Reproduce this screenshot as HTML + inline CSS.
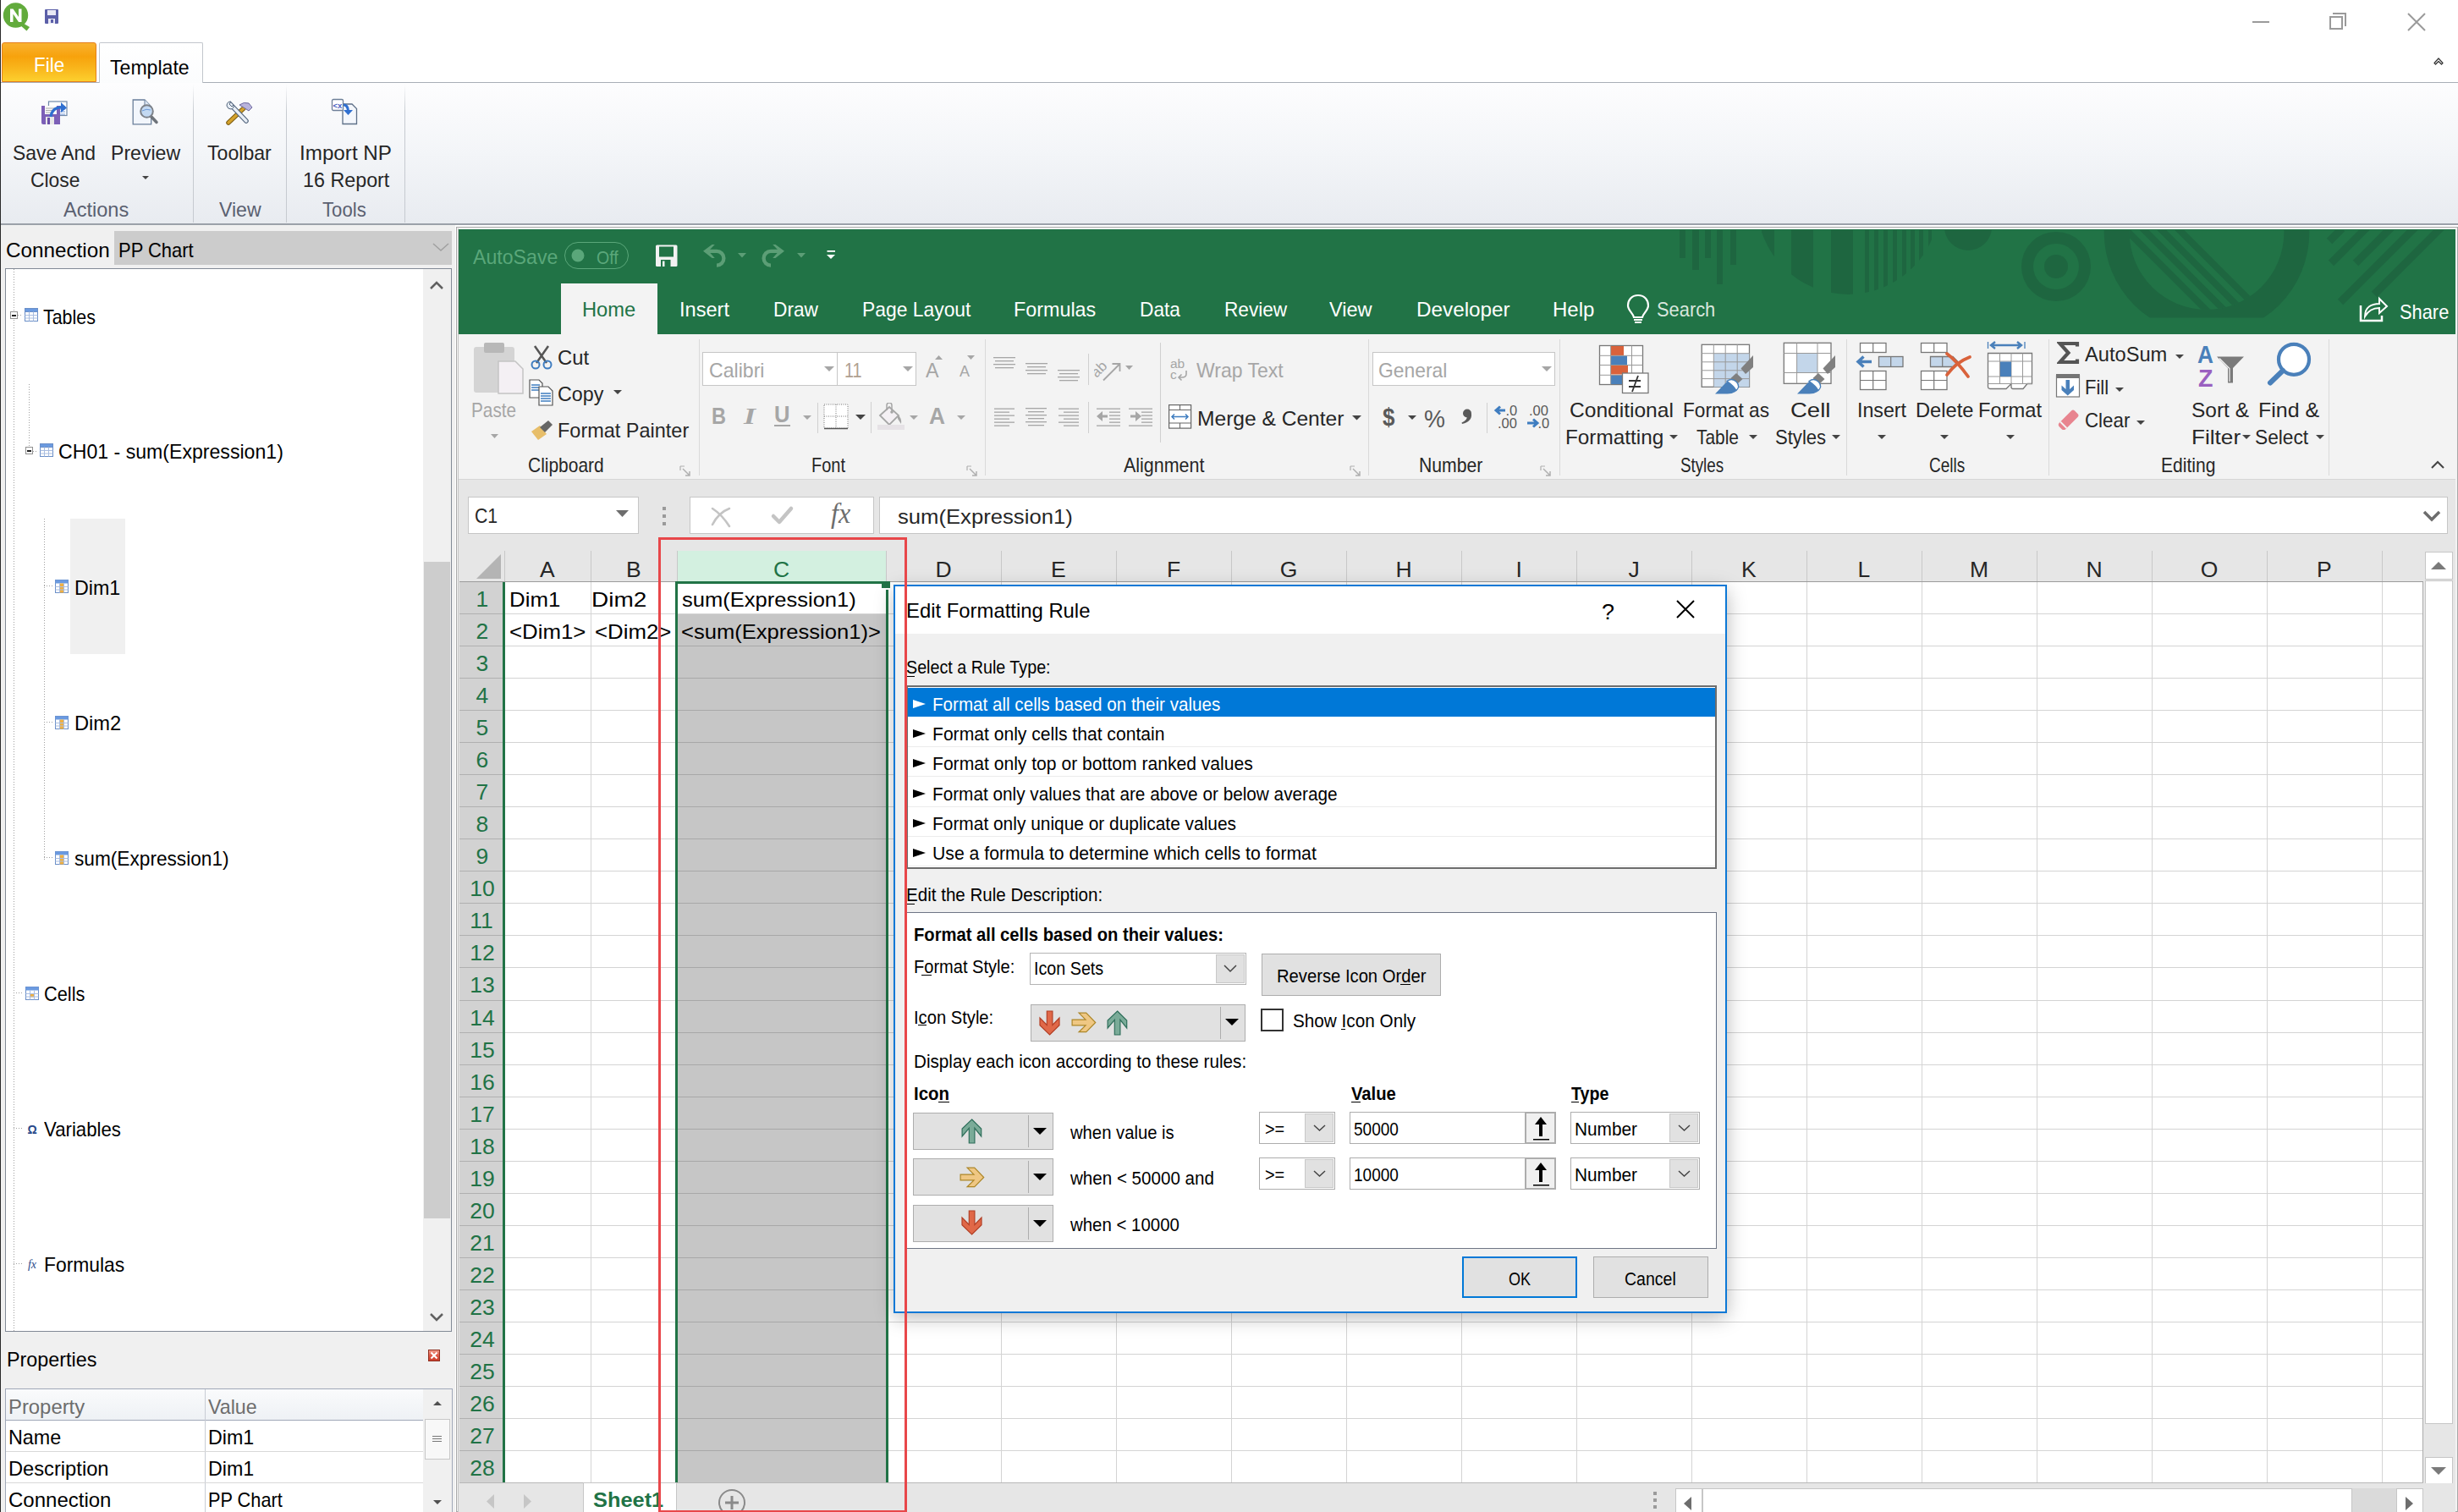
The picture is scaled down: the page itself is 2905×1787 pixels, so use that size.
<!DOCTYPE html><html><head><meta charset="utf-8"><style>*{margin:0;padding:0}
html,body{width:2905px;height:1787px;overflow:hidden;background:#fff;position:relative;font-family:"Liberation Sans",sans-serif}
.t{position:absolute;white-space:nowrap;line-height:normal;transform-origin:0 0}
.r{position:absolute}
</style></head><body>
<div class="r" style="left:0px;top:0px;width:2905px;height:50px;background:#ffffff;box-sizing:border-box;"></div>
<svg class="r" style="left:2px;top:2px;" width="38" height="36" viewBox="0 0 38 36"><circle cx="16.5" cy="16" r="14.7" fill="#62ab3c"/><path d="M23 24 L33 30 L29.5 34.5 L21 27 Z" fill="#62ab3c"/><path d="M10 24 V8.5 H13.5 L20 18 V8.5 H23.5 V24 H20 L13.5 14.5 V24 Z" fill="#fff"/></svg>
<svg class="r" style="left:53px;top:11px;" width="16" height="17" viewBox="0 0 16 17"><rect x="0" y="0" width="16" height="17" rx="1" fill="#5b5fa8"/><rect x="3" y="1" width="10" height="6" fill="#e8e8f5"/><rect x="4" y="11" width="8" height="6" fill="#e8e8f5"/><rect x="7" y="12" width="3" height="4" fill="#5b5fa8"/></svg>
<div class="r" style="left:2662px;top:25px;width:20px;height:2px;background:#9a9a9a;"></div>
<div class="r" style="left:2753px;top:19px;width:16px;height:16px;background:transparent;box-sizing:border-box;border:2px solid #9a9a9a;"></div>
<div class="r" style="left:2757px;top:15px;width:16px;height:16px;border-top:2px solid #9a9a9a;border-right:2px solid #9a9a9a;box-sizing:border-box"></div>
<svg class="r" style="left:2845px;top:15px;" width="22" height="22" viewBox="0 0 22 22"><path d="M1 1 L21 21 M21 1 L1 21" stroke="#9a9a9a" stroke-width="2"/></svg>
<div class="r" style="left:0px;top:50px;width:2905px;height:48px;background:#ffffff;box-sizing:border-box;"></div>
<div class="r" style="left:2px;top:50px;width:112px;height:47px;border-radius:3px 3px 0 0;background:linear-gradient(#f9b230,#f7a20c 35%,#f9b51b 65%,#fcd02e);border:1px solid #e57f1c;box-sizing:border-box"></div>
<div class="t" style="left:40.0px;top:62.8px;font-size:24px;color:#ffffff;transform:scaleX(0.935);">File</div>
<div class="r" style="left:117px;top:50px;width:123px;height:49px;background:linear-gradient(#fff,#fbfcfd);border:1px solid #c2c6cc;border-bottom:none;border-radius:2px 2px 0 0;box-sizing:border-box"></div>
<div class="t" style="left:130.0px;top:66.3px;font-size:24px;color:#000000;transform:scaleX(0.962);">Template</div>
<div class="r" style="left:0px;top:97px;width:117px;height:1px;background:#a9aeb6;"></div>
<div class="r" style="left:240px;top:97px;width:2665px;height:1px;background:#a9aeb6;"></div>
<div class="r" style="left:0;top:98px;width:2905px;height:167px;background:linear-gradient(#fdfdfe,#f3f5f8 50%,#e8ebf0)"></div>
<div class="r" style="left:0px;top:264px;width:2905px;height:2px;background:#9ba1a9;"></div>
<div class="r" style="left:228px;top:100px;width:1px;height:163px;background:linear-gradient(rgba(200,205,212,0),#c6cad0 20%,#c6cad0)"></div>
<div class="r" style="left:338px;top:100px;width:1px;height:163px;background:linear-gradient(rgba(200,205,212,0),#c6cad0 20%,#c6cad0)"></div>
<div class="r" style="left:478px;top:100px;width:1px;height:163px;background:linear-gradient(rgba(200,205,212,0),#c6cad0 20%,#c6cad0)"></div>
<svg class="r" style="left:2875px;top:66px;" width="14" height="12" viewBox="0 0 14 12"><path d="M2 8.5 L7 3 L12 8.5 L10.5 10 L7 6.5 L3.5 10 Z" stroke="#333" stroke-width="1.2" fill="none" stroke-linejoin="round"/></svg>
<svg class="r" style="left:48px;top:116px;" width="34" height="33" viewBox="0 0 34 33"><rect x="9.5" y="4" width="21.5" height="16.5" fill="#fff" stroke="#7089a8" stroke-width="1.2"/><path d="M18 9.5h11M18 13h11M18 16h11M18 19h11" stroke="#6f96d8" stroke-width="1"/><path d="M1 9 H23 V31 H3 Q1 31 1 29 Z" fill="#7c5fb7"/><rect x="5" y="9" width="14" height="10" fill="#fafafa"/><path d="M6 12h11M6 14.5h11M6 17h9" stroke="#a0a0a0" stroke-width="0.9"/><rect x="6" y="22" width="10" height="9" fill="#e8e8e8"/><rect x="8" y="23" width="3" height="8" fill="#6a4fa8"/><path d="M12 22 C13 14 19 10 25 11" stroke="#2f6fd0" stroke-width="3.2" fill="none"/><path d="M24 5 L31 11.5 L24 17 Z" fill="#2f6fd0"/></svg>
<svg class="r" style="left:154px;top:117px;" width="36" height="33" viewBox="0 0 36 33"><path d="M3.2 1 H17 L24.7 9 V29.8 H3.2 Z" fill="#f2f6fc" stroke="#6a7f9a" stroke-width="1.3"/><path d="M17 1 V9 H24.7" fill="#dfe9f6" stroke="#6a7f9a" stroke-width="1"/><path d="M23.5 19.5 L31 27.5" stroke="#6e737a" stroke-width="3.5" stroke-linecap="round"/><circle cx="19.5" cy="14.5" r="7.3" fill="#c3d9f2" stroke="#7d8289" stroke-width="2"/><path d="M14 14 Q19 11 24 13" stroke="#6c9ad8" stroke-width="1" fill="none"/></svg>
<svg class="r" style="left:266px;top:119px;" width="34" height="30" viewBox="0 0 34 30"><path d="M4 26 L22 9" stroke="#7a5a10" stroke-width="5.5" stroke-linecap="round"/><path d="M4 26 L22 9" stroke="#d4a22c" stroke-width="3.5" stroke-linecap="round"/><path d="M17 5 Q22 1 28 3 L32 8 L28 12 L25 10 Z" fill="#b9b4dc" stroke="#6e6aa0" stroke-width="1"/><path d="M6 4 L25 24" stroke="#52647c" stroke-width="5.5" stroke-linecap="round"/><path d="M6 4 L25 24" stroke="#e8eef6" stroke-width="3.3" stroke-linecap="round"/><path d="M2 6 Q2 1 7 1 L5 4 L8 7 L10 5 Q11 9 7 10 Q3 10 2 6 Z" fill="#e8eef6" stroke="#52647c" stroke-width="1"/></svg>
<svg class="r" style="left:390px;top:116px;" width="34" height="34" viewBox="0 0 34 34"><path d="M15 7 H26 L31.5 12.5 V30.5 H15 Z" fill="#f4f7fc" stroke="#5e7088" stroke-width="1.3"/><rect x="2.5" y="1.5" width="13" height="13" rx="1.5" fill="#fff" stroke="#6e7f98" stroke-width="1.3"/><text x="3.5" y="11.5" font-size="9.5" fill="#4a5cc0" font-family="Liberation Sans" font-weight="bold">&lt;x</text><path d="M16 8 Q21 8 21.5 15" stroke="#2f6fd0" stroke-width="3" fill="none"/><path d="M16 14 L21.5 20 L27 14 Z" fill="#2f6fd0"/></svg>
<div class="t" style="left:15.0px;top:167.3px;font-size:24px;color:#262626;transform:scaleX(0.954);">Save And</div>
<div class="t" style="left:36.0px;top:199.3px;font-size:24px;color:#262626;transform:scaleX(0.951);">Close</div>
<div class="t" style="left:131.0px;top:167.3px;font-size:24px;color:#262626;transform:scaleX(0.962);">Preview</div>
<svg class="r" style="left:168px;top:208px;" width="8" height="5" viewBox="0 0 8 5"><path d="M0 0 H8 L4 4 Z" fill="#444"/></svg>
<div class="t" style="left:245.0px;top:167.3px;font-size:24px;color:#262626;transform:scaleX(0.963);">Toolbar</div>
<div class="t" style="left:354.0px;top:167.3px;font-size:24px;color:#262626;transform:scaleX(1.009);">Import NP</div>
<div class="t" style="left:358.0px;top:199.3px;font-size:24px;color:#262626;transform:scaleX(0.971);">16 Report</div>
<div class="t" style="left:75.0px;top:234.3px;font-size:24px;color:#5a6070;transform:scaleX(0.981);">Actions</div>
<div class="t" style="left:259.0px;top:234.3px;font-size:24px;color:#5a6070;transform:scaleX(0.962);">View</div>
<div class="t" style="left:381.0px;top:234.3px;font-size:24px;color:#5a6070;transform:scaleX(0.923);">Tools</div>
<div class="r" style="left:0px;top:266px;width:538px;height:1521px;background:#f0f0f0;box-sizing:border-box;"></div>
<div class="t" style="left:7.0px;top:282.3px;font-size:24px;color:#000;transform:scaleX(1.010);">Connection</div>
<div class="r" style="left:135px;top:273px;width:399px;height:40px;background:#cccccc;box-sizing:border-box;"></div>
<div class="t" style="left:140.0px;top:282.3px;font-size:24px;color:#000;transform:scaleX(0.915);">PP Chart</div>
<svg class="r" style="left:510px;top:286px;" width="22" height="12" viewBox="0 0 22 12"><path d="M2 2 L11 10 L20 2" stroke="#a0a0a0" stroke-width="1.5" fill="none"/></svg>
<div class="r" style="left:6px;top:317px;width:528px;height:1257px;background:#ffffff;box-sizing:border-box;border:1px solid #828a96;"></div>
<div class="r" style="left:500px;top:318px;width:33px;height:1255px;background:#f0f0f0;box-sizing:border-box;"></div>
<div class="r" style="left:501px;top:664px;width:31px;height:776px;background:#cdcdcd;box-sizing:border-box;"></div>
<svg class="r" style="left:506px;top:330px;" width="20" height="14" viewBox="0 0 20 14"><path d="M3 11 L10 4 L17 11" stroke="#606060" stroke-width="2.5" fill="none"/></svg>
<svg class="r" style="left:506px;top:1550px;" width="20" height="14" viewBox="0 0 20 14"><path d="M3 3 L10 10 L17 3" stroke="#606060" stroke-width="2.5" fill="none"/></svg>
<div class="r" style="left:16px;top:318px;width:1px;height:1256px;background:repeating-linear-gradient(#a0a0a0 0 1px,transparent 1px 3px);"></div>
<div class="r" style="left:34px;top:454px;width:1px;height:82px;background:repeating-linear-gradient(#a0a0a0 0 1px,transparent 1px 3px);"></div>
<div class="r" style="left:52px;top:613px;width:1px;height:403px;background:repeating-linear-gradient(#a0a0a0 0 1px,transparent 1px 3px);"></div>
<div class="r" style="left:21px;top:372px;width:6px;height:1px;background:repeating-linear-gradient(90deg,#a0a0a0 0 1px,transparent 1px 3px);"></div>
<div class="r" style="left:39px;top:533px;width:6px;height:1px;background:repeating-linear-gradient(90deg,#a0a0a0 0 1px,transparent 1px 3px);"></div>
<div class="r" style="left:52px;top:692px;width:11px;height:1px;background:repeating-linear-gradient(90deg,#a0a0a0 0 1px,transparent 1px 3px);"></div>
<div class="r" style="left:52px;top:853px;width:11px;height:1px;background:repeating-linear-gradient(90deg,#a0a0a0 0 1px,transparent 1px 3px);"></div>
<div class="r" style="left:52px;top:1013px;width:11px;height:1px;background:repeating-linear-gradient(90deg,#a0a0a0 0 1px,transparent 1px 3px);"></div>
<div class="r" style="left:16px;top:1173px;width:12px;height:1px;background:repeating-linear-gradient(90deg,#a0a0a0 0 1px,transparent 1px 3px);"></div>
<div class="r" style="left:16px;top:1333px;width:12px;height:1px;background:repeating-linear-gradient(90deg,#a0a0a0 0 1px,transparent 1px 3px);"></div>
<div class="r" style="left:16px;top:1493px;width:12px;height:1px;background:repeating-linear-gradient(90deg,#a0a0a0 0 1px,transparent 1px 3px);"></div>
<div class="r" style="left:12px;top:368px;width:9px;height:9px;background:#fff;box-sizing:border-box;border:1px solid #909090;"></div>
<div class="r" style="left:14px;top:372px;width:5px;height:1.5px;background:#222;"></div>
<div class="r" style="left:30px;top:528px;width:9px;height:9px;background:#fff;box-sizing:border-box;border:1px solid #909090;"></div>
<div class="r" style="left:32px;top:532px;width:5px;height:1.5px;background:#222;"></div>
<svg class="r" style="left:29px;top:364px;" width="16" height="16" viewBox="0 0 16 16"><rect x="0.5" y="0.5" width="15" height="15" fill="#fff" stroke="#6b8fc8"/><rect x="0.5" y="0.5" width="15" height="4" fill="#6b9ae0" stroke="#6b8fc8"/><path d="M5.5 4.5V15.5M10.5 4.5V15.5M0.5 8.5H15.5M0.5 12H15.5" stroke="#a9bde0"/></svg>
<svg class="r" style="left:47px;top:524px;" width="16" height="16" viewBox="0 0 16 16"><rect x="0.5" y="0.5" width="15" height="15" fill="#fff" stroke="#6b8fc8"/><rect x="0.5" y="0.5" width="15" height="4" fill="#6b9ae0" stroke="#6b8fc8"/><path d="M5.5 4.5V15.5M10.5 4.5V15.5M0.5 8.5H15.5M0.5 12H15.5" stroke="#a9bde0"/></svg>
<svg class="r" style="left:65px;top:685px;" width="16" height="16" viewBox="0 0 16 16"><rect x="0.5" y="0.5" width="15" height="15" fill="#fff" stroke="#6b8fc8"/><rect x="0.5" y="0.5" width="15" height="4" fill="#6b9ae0"/><rect x="5.5" y="4.5" width="5" height="11" fill="#f0b040"/><path d="M5.5 4.5V15.5M10.5 4.5V15.5M0.5 8.5H15.5M0.5 12H15.5" stroke="#a9bde0"/></svg>
<svg class="r" style="left:65px;top:846px;" width="16" height="16" viewBox="0 0 16 16"><rect x="0.5" y="0.5" width="15" height="15" fill="#fff" stroke="#6b8fc8"/><rect x="0.5" y="0.5" width="15" height="4" fill="#6b9ae0"/><rect x="5.5" y="4.5" width="5" height="11" fill="#f0b040"/><path d="M5.5 4.5V15.5M10.5 4.5V15.5M0.5 8.5H15.5M0.5 12H15.5" stroke="#a9bde0"/></svg>
<svg class="r" style="left:65px;top:1006px;" width="16" height="16" viewBox="0 0 16 16"><rect x="0.5" y="0.5" width="15" height="15" fill="#fff" stroke="#6b8fc8"/><rect x="0.5" y="0.5" width="15" height="4" fill="#6b9ae0"/><rect x="5.5" y="4.5" width="5" height="11" fill="#f0b040"/><path d="M5.5 4.5V15.5M10.5 4.5V15.5M0.5 8.5H15.5M0.5 12H15.5" stroke="#a9bde0"/></svg>
<svg class="r" style="left:30px;top:1166px;" width="16" height="16" viewBox="0 0 16 16"><rect x="0.5" y="0.5" width="15" height="15" fill="#fff" stroke="#6b8fc8"/><rect x="0.5" y="0.5" width="15" height="4" fill="#6b9ae0"/><rect x="5.5" y="8.5" width="5" height="4" fill="#f0b040"/><path d="M5.5 4.5V15.5M10.5 4.5V15.5M0.5 8.5H15.5M0.5 12H15.5" stroke="#a9bde0"/></svg>
<svg class="r" style="left:30px;top:1327px;" width="16" height="16" viewBox="0 0 16 16"><text x="8" y="13" text-anchor="middle" font-family="Liberation Sans" font-weight="bold" font-size="14" fill="#2a4a8a">&#937;</text></svg>
<svg class="r" style="left:29px;top:1486px;" width="18" height="18" viewBox="0 0 18 18"><text x="9" y="13" text-anchor="middle" font-family="Liberation Serif" font-style="italic" font-size="14" fill="#2a4a8a">fx</text></svg>
<div class="r" style="left:83px;top:613px;width:65px;height:160px;background:#f0f0f0;box-sizing:border-box;"></div>
<div class="t" style="left:51.0px;top:361.3px;font-size:24px;color:#000;transform:scaleX(0.892);">Tables</div>
<div class="t" style="left:69.0px;top:520.3px;font-size:24px;color:#000;transform:scaleX(0.963);">CH01 - sum(Expression1)</div>
<div class="t" style="left:88.0px;top:680.8px;font-size:24px;color:#000;transform:scaleX(0.969);">Dim1</div>
<div class="t" style="left:88.0px;top:841.3px;font-size:24px;color:#000;transform:scaleX(0.987);">Dim2</div>
<div class="t" style="left:88.0px;top:1000.8px;font-size:24px;color:#000;transform:scaleX(0.944);">sum(Expression1)</div>
<div class="t" style="left:52.0px;top:1161.3px;font-size:24px;color:#000;transform:scaleX(0.906);">Cells</div>
<div class="t" style="left:52.0px;top:1321.3px;font-size:24px;color:#000;transform:scaleX(0.925);">Variables</div>
<div class="t" style="left:52.0px;top:1480.8px;font-size:24px;color:#000;transform:scaleX(0.952);">Formulas</div>
<div class="t" style="left:8.0px;top:1592.8px;font-size:24px;color:#000;transform:scaleX(0.972);">Properties</div>
<svg class="r" style="left:506px;top:1595px;" width="14" height="14" viewBox="0 0 14 14"><defs><linearGradient id="rx" x1="0" y1="0" x2="0" y2="1"><stop offset="0" stop-color="#f0a090"/><stop offset="0.5" stop-color="#e05a48"/><stop offset="1" stop-color="#c83a28"/></linearGradient></defs><rect x="0.5" y="0.5" width="13" height="13" fill="url(#rx)" stroke="#903020"/><path d="M3.5 3.5 L10.5 10.5 M10.5 3.5 L3.5 10.5" stroke="#fff" stroke-width="2"/></svg>
<div class="r" style="left:6px;top:1641px;width:529px;height:148px;background:#ffffff;box-sizing:border-box;border:1px solid #a0a8b8;"></div>
<div class="r" style="left:7px;top:1642px;width:493px;height:36px;background:linear-gradient(#fafbfc,#eef1f5)"></div>
<div class="r" style="left:7px;top:1678px;width:493px;height:1px;background:#a0a8b8;"></div>
<div class="r" style="left:242px;top:1642px;width:1px;height:145px;background:#c8ccd4;"></div>
<div class="r" style="left:7px;top:1715px;width:493px;height:1px;background:#d8d8d8;"></div>
<div class="r" style="left:7px;top:1752px;width:493px;height:1px;background:#d8d8d8;"></div>
<div class="r" style="left:500px;top:1642px;width:34px;height:145px;background:#f0f0f0;box-sizing:border-box;"></div>
<div class="r" style="left:502px;top:1677px;width:30px;height:48px;background:#f8f8f8;box-sizing:border-box;border:1px solid #c8c8c8;"></div>
<svg class="r" style="left:510px;top:1654px;" width="14" height="8" viewBox="0 0 14 8"><path d="M2 7 L7 2 L12 7 Z" fill="#505050"/></svg>
<svg class="r" style="left:510px;top:1772px;" width="14" height="8" viewBox="0 0 14 8"><path d="M2 1 L7 6 L12 1 Z" fill="#505050"/></svg>
<div class="r" style="left:511px;top:1697px;width:11px;height:1px;background:#777;"></div>
<div class="r" style="left:511px;top:1700px;width:11px;height:1px;background:#777;"></div>
<div class="r" style="left:511px;top:1703px;width:11px;height:1px;background:#777;"></div>
<div class="t" style="left:10.0px;top:1648.8px;font-size:24px;color:#6d6d6d;transform:scaleX(0.994);">Property</div>
<div class="t" style="left:246.0px;top:1648.8px;font-size:24px;color:#6d6d6d;transform:scaleX(0.967);">Value</div>
<div class="t" style="left:10.0px;top:1685.3px;font-size:24px;color:#000;transform:scaleX(0.973);">Name</div>
<div class="t" style="left:246.0px;top:1685.3px;font-size:24px;color:#000;transform:scaleX(0.969);">Dim1</div>
<div class="t" style="left:10.0px;top:1722.3px;font-size:24px;color:#000;transform:scaleX(0.987);">Description</div>
<div class="t" style="left:246.0px;top:1722.3px;font-size:24px;color:#000;transform:scaleX(0.969);">Dim1</div>
<div class="t" style="left:10.0px;top:1759.3px;font-size:24px;color:#000;">Connection</div>
<div class="t" style="left:246.0px;top:1759.3px;font-size:24px;color:#000;transform:scaleX(0.905);">PP Chart</div>
<div class="r" style="left:539px;top:268px;width:2366px;height:1519px;background:#f3f3f3;box-sizing:border-box;border:1px solid #a8a8a8;"></div>
<div class="r" style="left:541px;top:270px;width:1px;height:1517px;background:#c4c4c4;"></div>
<div class="r" style="left:542px;top:271px;width:2360px;height:124px;background:#217346;box-sizing:border-box;"></div>
<svg class="r" style="left:1940px;top:272px;" width="962" height="123" viewBox="0 0 962 123"><rect x="45" y="0" width="7" height="33" fill="#1e6640"/><rect x="60" y="0" width="8" height="47" fill="#1e6640"/><rect x="75" y="0" width="7" height="33" fill="#1e6640"/><rect x="89" y="0" width="7" height="64" fill="#1e6640"/><rect x="105" y="0" width="7" height="41" fill="#1e6640"/><clipPath id="cc"><circle cx="244.3" cy="-31.9" r="107.8"/></clipPath><g clip-path="url(#cc)"><rect x="142" y="0" width="15" height="123" fill="#1e6640"/><rect x="177" y="0" width="26" height="123" fill="#1e6640"/><rect x="224" y="0" width="26" height="123" fill="#1e6640"/><rect x="264" y="0" width="5" height="123" fill="#1e6640"/><rect x="275" y="0" width="5" height="123" fill="#1e6640"/><rect x="286" y="0" width="5" height="123" fill="#1e6640"/><rect x="297" y="0" width="5" height="123" fill="#1e6640"/><rect x="308" y="0" width="5" height="123" fill="#1e6640"/><rect x="318" y="0" width="5" height="123" fill="#1e6640"/><rect x="328" y="0" width="5" height="123" fill="#1e6640"/><rect x="339" y="0" width="4" height="123" fill="#1e6640"/></g><circle cx="386" cy="-4" r="28" fill="#1e6640"/><circle cx="490" cy="43" r="41" fill="#1e6640"/><circle cx="490" cy="43" r="27" fill="#217346"/><circle cx="490" cy="43" r="14" fill="#1e6640"/><clipPath id="cb"><rect x="0" y="0" width="1000" height="103.6"/></clipPath><g clip-path="url(#cb)"><circle cx="668" cy="2.7" r="121.3" fill="#1e6640"/><circle cx="668" cy="2.5" r="91.4" fill="#217346"/><clipPath id="ci"><circle cx="668" cy="2.5" r="91.4"/></clipPath><g clip-path="url(#ci)"><path d="M567.5 0 H578.5 L718.5 140 H707.5 Z" fill="#1e6640"/><path d="M588.7 0 H599.7 L739.7 140 H728.7 Z" fill="#1e6640"/><path d="M609.3 0 H620.3 L760.3 140 H749.3 Z" fill="#1e6640"/><path d="M630.4 0 H641.4 L781.4 140 H770.4 Z" fill="#1e6640"/></g></g><path d="M813 13 L828 -2" stroke="#1e6640" stroke-width="9"/><path d="M815 39 L857 -3" stroke="#1e6640" stroke-width="9"/><path d="M844 39 L886 -3" stroke="#1e6640" stroke-width="9"/><path d="M826 85 L916 -5" stroke="#1e6640" stroke-width="9"/><path d="M866 76 L948 -6" stroke="#1e6640" stroke-width="9"/></svg>
<div class="t" style="left:559.0px;top:289.8px;font-size:24px;color:#5aa77a;transform:scaleX(0.964);">AutoSave</div>
<div class="r" style="left:667px;top:286px;width:76px;height:32px;background:transparent;box-sizing:border-box;border:1.5px solid #5aa77a;;border-radius:16px"></div>
<svg class="r" style="left:675px;top:294px;" width="16" height="16" viewBox="0 0 16 16"><circle cx="8" cy="8" r="7.5" fill="#5aa77a"/></svg>
<div class="t" style="left:705.0px;top:291.6px;font-size:22px;color:#5aa77a;transform:scaleX(0.889);">Off</div>
<svg class="r" style="left:775px;top:289px;" width="26" height="26" viewBox="0 0 26 26"><rect x="0" y="0.5" width="25.5" height="25.5" rx="1.5" fill="#f2f2f2"/><rect x="4" y="2.5" width="17" height="12" fill="#217346"/><rect x="6" y="18" width="11.5" height="8" fill="#217346"/><rect x="8" y="19.5" width="2.5" height="6.5" fill="#f2f2f2"/></svg>
<svg class="r" style="left:829px;top:288px;" width="32" height="30" viewBox="0 0 32 30"><path d="M2 8.7 L12.5 1 H15.8 L8.3 8.7 L15.8 17 H12.5 Z" fill="#5c9e76"/><path d="M7 8.9 H18 A8.4 8.4 0 0 1 18 25.7" stroke="#5c9e76" stroke-width="4.3" fill="none"/></svg>
<svg class="r" style="left:872px;top:299px;" width="10" height="6" viewBox="0 0 10 6"><path d="M0 0 H10 L5 5.5 Z" fill="#5c9e76"/></svg>
<svg class="r" style="left:897px;top:288px;" width="32" height="30" viewBox="0 0 32 30"><path d="M30 8.7 L19.5 1 H16.2 L23.7 8.7 L16.2 17 H19.5 Z" fill="#5c9e76"/><path d="M25 8.9 H14 A8.4 8.4 0 0 0 14 25.7" stroke="#5c9e76" stroke-width="4.3" fill="none"/></svg>
<svg class="r" style="left:942px;top:299px;" width="10" height="6" viewBox="0 0 10 6"><path d="M0 0 H10 L5 5.5 Z" fill="#5c9e76"/></svg>
<svg class="r" style="left:977px;top:296px;" width="11" height="11" viewBox="0 0 11 11"><rect x="0.5" y="0" width="9.5" height="1.8" fill="#fff"/><path d="M0 5 H10 L5 10 Z" fill="#fff"/></svg>
<div class="r" style="left:663px;top:335px;width:114px;height:60px;background:#f3f3f3;box-sizing:border-box;"></div>
<div class="t" style="left:688.0px;top:352.3px;font-size:24px;color:#217346;transform:scaleX(0.988);">Home</div>
<div class="t" style="left:803.0px;top:352.3px;font-size:24px;color:#ffffff;transform:scaleX(0.983);">Insert</div>
<div class="t" style="left:914.0px;top:352.3px;font-size:24px;color:#ffffff;transform:scaleX(0.946);">Draw</div>
<div class="t" style="left:1019.0px;top:352.3px;font-size:24px;color:#ffffff;transform:scaleX(0.953);">Page Layout</div>
<div class="t" style="left:1198.0px;top:352.3px;font-size:24px;color:#ffffff;transform:scaleX(0.972);">Formulas</div>
<div class="t" style="left:1347.0px;top:352.3px;font-size:24px;color:#ffffff;transform:scaleX(0.946);">Data</div>
<div class="t" style="left:1447.0px;top:352.3px;font-size:24px;color:#ffffff;transform:scaleX(0.943);">Review</div>
<div class="t" style="left:1571.0px;top:352.3px;font-size:24px;color:#ffffff;transform:scaleX(0.981);">View</div>
<div class="t" style="left:1674.0px;top:352.3px;font-size:24px;color:#ffffff;transform:scaleX(1.011);">Developer</div>
<div class="t" style="left:1835.0px;top:352.3px;font-size:24px;color:#ffffff;">Help</div>
<svg class="r" style="left:1922px;top:347px;" width="28" height="36" viewBox="0 0 28 36"><path d="M14 2 C6 2 2 8 2 14 C2 20 8 23 9 28 H19 C20 23 26 20 26 14 C26 8 22 2 14 2 Z" stroke="#fff" stroke-width="2.2" fill="none"/><path d="M9 31 H19 M10 34 H18" stroke="#fff" stroke-width="2"/></svg>
<div class="t" style="left:1958.0px;top:352.3px;font-size:24px;color:#d8e6dd;transform:scaleX(0.911);">Search</div>
<svg class="r" style="left:2787px;top:349px;" width="36" height="32" viewBox="0 0 36 32"><path d="M3 12 V30 H28 V24" stroke="#fff" stroke-width="2.5" fill="none"/><path d="M8 25 C8 14 16 10 25 10 V4 L34 13 L25 21 V15 C17 15 12 18 8 25 Z" stroke="#fff" stroke-width="2" fill="none"/></svg>
<div class="t" style="left:2836.0px;top:355.3px;font-size:24px;color:#ffffff;transform:scaleX(0.910);">Share</div>
<div class="r" style="left:542px;top:395px;width:2360px;height:171px;background:#f3f3f3;box-sizing:border-box;"></div>
<div class="r" style="left:542px;top:566px;width:2360px;height:1px;background:#d6d6d6;"></div>
<div class="r" style="left:826px;top:401px;width:1px;height:161px;background:#d9d9d9;"></div>
<div class="r" style="left:1164px;top:401px;width:1px;height:161px;background:#d9d9d9;"></div>
<div class="r" style="left:1617px;top:401px;width:1px;height:161px;background:#d9d9d9;"></div>
<div class="r" style="left:1843px;top:401px;width:1px;height:161px;background:#d9d9d9;"></div>
<div class="r" style="left:2182px;top:401px;width:1px;height:161px;background:#d9d9d9;"></div>
<div class="r" style="left:2421px;top:401px;width:1px;height:161px;background:#d9d9d9;"></div>
<div class="r" style="left:2752px;top:401px;width:1px;height:161px;background:#d9d9d9;"></div>
<svg class="r" style="left:803px;top:550px;" width="14" height="14" viewBox="0 0 14 14"><path d="M1 1 H6 M1 1 V6" stroke="#b0b0b0" stroke-width="1.2"/><path d="M4 4 L12 12 M12 7 V12 H7" stroke="#b0b0b0" stroke-width="1.5" fill="none"/></svg>
<svg class="r" style="left:1142px;top:550px;" width="14" height="14" viewBox="0 0 14 14"><path d="M1 1 H6 M1 1 V6" stroke="#b0b0b0" stroke-width="1.2"/><path d="M4 4 L12 12 M12 7 V12 H7" stroke="#b0b0b0" stroke-width="1.5" fill="none"/></svg>
<svg class="r" style="left:1595px;top:550px;" width="14" height="14" viewBox="0 0 14 14"><path d="M1 1 H6 M1 1 V6" stroke="#b0b0b0" stroke-width="1.2"/><path d="M4 4 L12 12 M12 7 V12 H7" stroke="#b0b0b0" stroke-width="1.5" fill="none"/></svg>
<svg class="r" style="left:1820px;top:550px;" width="14" height="14" viewBox="0 0 14 14"><path d="M1 1 H6 M1 1 V6" stroke="#b0b0b0" stroke-width="1.2"/><path d="M4 4 L12 12 M12 7 V12 H7" stroke="#b0b0b0" stroke-width="1.5" fill="none"/></svg>
<div class="t" style="left:624.0px;top:536.3px;font-size:24px;color:#262626;transform:scaleX(0.873);">Clipboard</div>
<div class="t" style="left:959.0px;top:536.3px;font-size:24px;color:#262626;transform:scaleX(0.833);">Font</div>
<div class="t" style="left:1328.0px;top:536.3px;font-size:24px;color:#262626;transform:scaleX(0.894);">Alignment</div>
<div class="t" style="left:1677.0px;top:536.3px;font-size:24px;color:#262626;transform:scaleX(0.882);">Number</div>
<div class="t" style="left:1986.0px;top:536.3px;font-size:24px;color:#262626;transform:scaleX(0.782);">Styles</div>
<div class="t" style="left:2280.0px;top:536.3px;font-size:24px;color:#262626;transform:scaleX(0.792);">Cells</div>
<div class="t" style="left:2554.0px;top:536.3px;font-size:24px;color:#262626;transform:scaleX(0.877);">Editing</div>
<svg class="r" style="left:558px;top:403px;" width="62" height="64" viewBox="0 0 62 64"><rect x="2" y="7" width="48" height="54" rx="3" fill="#d4d4d4"/><rect x="14" y="2" width="24" height="12" rx="2" fill="#b8b8b8"/><path d="M31 24 H51 L60 33 V62 H31 Z" fill="#f4f0f4" stroke="#c4c4c4" stroke-width="1.5"/></svg>
<div class="t" style="left:557.0px;top:471.3px;font-size:24px;color:#a6a6a6;transform:scaleX(0.865);">Paste</div>
<svg class="r" style="left:580px;top:513px;" width="9" height="5" viewBox="0 0 9 5"><path d="M0 0 H9 L4.5 5 Z" fill="#a6a6a6"/></svg>
<svg class="r" style="left:626px;top:407px;" width="28" height="30" viewBox="0 0 28 30"><path d="M6 2 L20 22 M22 2 L8 22" stroke="#555" stroke-width="2.5"/><circle cx="7" cy="24" r="4.5" fill="none" stroke="#3f7dc0" stroke-width="2"/><circle cx="21" cy="24" r="4.5" fill="none" stroke="#3f7dc0" stroke-width="2"/></svg>
<div class="t" style="left:659.0px;top:409.3px;font-size:24px;color:#262626;transform:scaleX(0.993);">Cut</div>
<svg class="r" style="left:625px;top:448px;" width="30" height="32" viewBox="0 0 30 32"><path d="M1 1 H12 L16 5 V22 H1 Z" fill="#fff" stroke="#555" stroke-width="1.2"/><path d="M3 7 H13 M3 10 H13 M3 13 H13" stroke="#3f7dc0" stroke-width="1.3"/><path d="M12 9 H23 L28 14 V31 H12 Z" fill="#fff" stroke="#555" stroke-width="1.2"/><path d="M14 17 H26 M14 20 H26 M14 23 H26 M14 26 H26" stroke="#3f7dc0" stroke-width="1.3"/></svg>
<div class="t" style="left:659.0px;top:452.3px;font-size:24px;color:#262626;transform:scaleX(0.969);">Copy</div>
<svg class="r" style="left:725px;top:461px;" width="10" height="6" viewBox="0 0 10 6"><path d="M0 0 H10 L5 5 Z" fill="#444"/></svg>
<svg class="r" style="left:626px;top:495px;" width="28" height="26" viewBox="0 0 28 26"><path d="M2 15 L12 8 L20 18 L10 25 Z" fill="#e7be6a"/><path d="M12 10 L22 2 L27 7 L18 16 Z" fill="#666"/></svg>
<div class="t" style="left:659.0px;top:495.3px;font-size:24px;color:#262626;transform:scaleX(0.978);">Format Painter</div>
<div class="r" style="left:830px;top:416px;width:160px;height:40px;background:#ffffff;box-sizing:border-box;border:1px solid #c6c6c6;"></div>
<div class="r" style="left:989px;top:416px;width:94px;height:40px;background:#ffffff;box-sizing:border-box;border:1px solid #c6c6c6;"></div>
<div class="t" style="left:838.0px;top:424.3px;font-size:24px;color:#a6a6a6;transform:scaleX(0.963);">Calibri</div>
<div class="t" style="left:998.0px;top:424.3px;font-size:24px;color:#b0a090;transform:scaleX(0.830);">11</div>
<svg class="r" style="left:974px;top:433px;" width="12" height="7" viewBox="0 0 12 7"><path d="M0 0 H12 L6 6 Z" fill="#a6a6a6"/></svg>
<svg class="r" style="left:1067px;top:433px;" width="12" height="7" viewBox="0 0 12 7"><path d="M0 0 H12 L6 6 Z" fill="#a6a6a6"/></svg>
<div class="t" style="left:1094.0px;top:423.8px;font-size:24px;color:#a6a6a6;transform:scaleX(0.969);">A</div>
<svg class="r" style="left:1105px;top:420px;" width="9" height="5" viewBox="0 0 9 5"><path d="M0 5 L4.5 0 L9 5 Z" fill="#a6a6a6"/></svg>
<div class="t" style="left:1134.0px;top:429.2px;font-size:18px;color:#a6a6a6;">A</div>
<svg class="r" style="left:1143px;top:420px;" width="9" height="5" viewBox="0 0 9 5"><path d="M0 0 H9 L4.5 5 Z" fill="#a6a6a6"/></svg>
<div class="t" style="left:840.5px;top:475.7px;font-size:28px;color:#a6a6a6;font-weight:bold;transform:scaleX(0.840);">B</div>
<div class="t" style="left:878.5px;top:475.7px;font-size:28px;color:#a6a6a6;font-weight:bold;font-style:italic;transform:scaleX(1.282);font-family:'Liberation Serif'">I</div>
<div class="t" style="left:915.0px;top:475.1px;font-size:27px;color:#a6a6a6;font-weight:bold;transform:scaleX(0.949);">U</div>
<div class="r" style="left:915px;top:502px;width:19px;height:2px;background:#a6a6a6;"></div>
<svg class="r" style="left:949px;top:491px;" width="10" height="6" viewBox="0 0 10 6"><path d="M0 0 H10 L5 5 Z" fill="#a6a6a6"/></svg>
<div class="r" style="left:966px;top:476px;width:1px;height:36px;background:#d0d0d0;"></div>
<svg class="r" style="left:973px;top:477px;" width="31" height="31" viewBox="0 0 31 31"><rect x="1" y="1" width="28" height="28" fill="#fff" stroke="#777" stroke-dasharray="1 1.5"/><path d="M15 1 V29 M1 15 H29" stroke="#777" stroke-dasharray="1 1.5"/><path d="M1 29.5 H29" stroke="#555" stroke-width="1.5"/></svg>
<svg class="r" style="left:1011px;top:490px;" width="12" height="7" viewBox="0 0 12 7"><path d="M0 0 H12 L6 6 Z" fill="#444"/></svg>
<div class="r" style="left:1029px;top:475px;width:1px;height:37px;background:#d0d0d0;"></div>
<svg class="r" style="left:1036px;top:476px;" width="34" height="34" viewBox="0 0 34 34"><path d="M4 15 L15 5 L26 15 L15 26 Z" fill="#f4f0f4" stroke="#a6a6a6" stroke-width="1.8"/><path d="M12 9 V3 Q12 0 15 0 Q18 0 18 3 V11" stroke="#a6a6a6" stroke-width="1.5" fill="none"/><circle cx="18" cy="11" r="1.8" fill="#a6a6a6"/><path d="M25 14 Q30 18 29 25 Q27 22 25 19 Z" fill="#a6a6a6"/><rect x="1" y="26" width="32" height="6" fill="#e6e2e6"/></svg>
<svg class="r" style="left:1075px;top:491px;" width="10" height="6" viewBox="0 0 10 6"><path d="M0 0 H10 L5 5 Z" fill="#a6a6a6"/></svg>
<div class="t" style="left:1098.0px;top:475.7px;font-size:28px;color:#a6a6a6;font-weight:bold;transform:scaleX(0.938);">A</div>
<svg class="r" style="left:1131px;top:491px;" width="10" height="6" viewBox="0 0 10 6"><path d="M0 0 H10 L5 5 Z" fill="#a6a6a6"/></svg>
<svg class="r" style="left:1160px;top:400px;" width="220" height="120" viewBox="0 0 220 120"><rect x="14" y="22" width="26" height="1.3" fill="#a6a6a6"/><rect x="16" y="26" width="22" height="1.3" fill="#a6a6a6"/><rect x="14" y="30" width="26" height="1.3" fill="#a6a6a6"/><rect x="16" y="34" width="22" height="1.3" fill="#a6a6a6"/><rect x="52" y="29" width="26" height="1.3" fill="#a6a6a6"/><rect x="54" y="33" width="22" height="1.3" fill="#a6a6a6"/><rect x="52" y="37" width="26" height="1.3" fill="#a6a6a6"/><rect x="54" y="41" width="22" height="1.3" fill="#a6a6a6"/><rect x="90" y="37" width="26" height="1.3" fill="#a6a6a6"/><rect x="92" y="41" width="22" height="1.3" fill="#a6a6a6"/><rect x="90" y="45" width="26" height="1.3" fill="#a6a6a6"/><rect x="92" y="49" width="22" height="1.3" fill="#a6a6a6"/><rect x="15" y="82.5" width="24" height="1.3" fill="#a6a6a6"/><rect x="52" y="82.0" width="25" height="1.3" fill="#a6a6a6"/><rect x="91" y="82.5" width="24" height="1.3" fill="#a6a6a6"/><rect x="15" y="86.5" width="18" height="1.3" fill="#a6a6a6"/><rect x="55" y="86.0" width="19" height="1.3" fill="#a6a6a6"/><rect x="97" y="86.5" width="18" height="1.3" fill="#a6a6a6"/><rect x="15" y="90.5" width="24" height="1.3" fill="#a6a6a6"/><rect x="52" y="90.0" width="25" height="1.3" fill="#a6a6a6"/><rect x="91" y="90.5" width="24" height="1.3" fill="#a6a6a6"/><rect x="15" y="94.5" width="18" height="1.3" fill="#a6a6a6"/><rect x="55" y="94.0" width="19" height="1.3" fill="#a6a6a6"/><rect x="97" y="94.5" width="18" height="1.3" fill="#a6a6a6"/><rect x="15" y="98.5" width="24" height="1.3" fill="#a6a6a6"/><rect x="52" y="98.0" width="25" height="1.3" fill="#a6a6a6"/><rect x="91" y="98.5" width="24" height="1.3" fill="#a6a6a6"/><rect x="15" y="102.5" width="18" height="1.3" fill="#a6a6a6"/><rect x="55" y="102.0" width="19" height="1.3" fill="#a6a6a6"/><rect x="97" y="102.5" width="18" height="1.3" fill="#a6a6a6"/><rect x="136" y="82.5" width="28" height="1.3" fill="#a6a6a6"/><rect x="136" y="102.5" width="28" height="1.3" fill="#a6a6a6"/><rect x="151" y="86.5" width="13" height="1.3" fill="#a6a6a6"/><rect x="151" y="90.5" width="13" height="1.3" fill="#a6a6a6"/><rect x="151" y="94.5" width="13" height="1.3" fill="#a6a6a6"/><rect x="151" y="98.5" width="13" height="1.3" fill="#a6a6a6"/><rect x="174" y="82.5" width="28" height="1.3" fill="#a6a6a6"/><rect x="174" y="102.5" width="28" height="1.3" fill="#a6a6a6"/><rect x="189" y="86.5" width="13" height="1.3" fill="#a6a6a6"/><rect x="189" y="90.5" width="13" height="1.3" fill="#a6a6a6"/><rect x="189" y="94.5" width="13" height="1.3" fill="#a6a6a6"/><rect x="189" y="98.5" width="13" height="1.3" fill="#a6a6a6"/><path d="M136 92 L143 86 V90.5 H149 V93.5 H143 V98 Z" fill="#a6a6a6"/><path d="M189 92 L182 86 V90.5 H176 V93.5 H182 V98 Z" fill="#a6a6a6"/></svg>
<div class="r" style="left:1286px;top:418px;width:1px;height:37px;background:#d0d0d0;"></div>
<svg class="r" style="left:1293px;top:422px;" width="44" height="32" viewBox="0 0 44 32"><text x="0" y="0" font-size="17" fill="#a6a6a6" font-family="Liberation Sans" transform="translate(3,25) rotate(-45)">ab</text><path d="M11 27.5 L30.5 8 M21.5 8 H30.5 V17" stroke="#a6a6a6" stroke-width="1.8" fill="none"/></svg>
<svg class="r" style="left:1330px;top:432px;" width="9" height="5" viewBox="0 0 9 5"><path d="M0 0 H9 L4.5 5 Z" fill="#a6a6a6"/></svg>
<div class="r" style="left:1371px;top:405px;width:1px;height:118px;background:#d0d0d0;"></div>
<svg class="r" style="left:1383px;top:421px;" width="24" height="30" viewBox="0 0 24 30"><text x="0" y="14" font-size="15.5" fill="#a6a6a6" font-family="Liberation Sans">ab</text><text x="0" y="27" font-size="15.5" fill="#a6a6a6" font-family="Liberation Sans">c</text><path d="M19 17 V21 Q19 25 14 25 H10.5 M13.5 21.5 L10 25 L13.5 28.5" stroke="#a6a6a6" stroke-width="1.6" fill="none"/></svg>
<div class="t" style="left:1414.0px;top:424.3px;font-size:24px;color:#a6a6a6;transform:scaleX(0.957);">Wrap Text</div>
<div class="r" style="left:1286px;top:475px;width:1px;height:37px;background:#d0d0d0;"></div>
<svg class="r" style="left:1381px;top:478px;" width="28" height="30" viewBox="0 0 28 30"><rect x="0.6" y="0.6" width="26" height="27.5" fill="#fff" stroke="#666" stroke-width="1.2"/><path d="M0.5 6.5 H27 M0.5 22 H27 M13.5 0.5 V6.5 M13.5 22 V28" stroke="#666" stroke-width="1.1"/><path d="M4 14.5 H23 M7 11.5 L4 14.5 L7 17.5 M20 11.5 L23 14.5 L20 17.5" stroke="#3f7dc0" stroke-width="1.5" fill="none"/></svg>
<div class="t" style="left:1415.0px;top:481.3px;font-size:24px;color:#262626;transform:scaleX(1.024);">Merge &amp; Center</div>
<svg class="r" style="left:1598px;top:491px;" width="11" height="6" viewBox="0 0 11 6"><path d="M0 0 H11 L5.5 5.5 Z" fill="#444"/></svg>
<div class="r" style="left:1622px;top:416px;width:216px;height:40px;background:#ffffff;box-sizing:border-box;border:1px solid #c6c6c6;"></div>
<div class="t" style="left:1629.0px;top:424.3px;font-size:24px;color:#a6a6a6;transform:scaleX(0.953);">General</div>
<svg class="r" style="left:1822px;top:433px;" width="12" height="7" viewBox="0 0 12 7"><path d="M0 0 H12 L6 6 Z" fill="#a6a6a6"/></svg>
<div class="t" style="left:1633.5px;top:475.8px;font-size:30px;color:#595959;font-weight:bold;transform:scaleX(0.866);">$</div>
<svg class="r" style="left:1664px;top:491px;" width="10" height="6" viewBox="0 0 10 6"><path d="M0 0 H10 L5 5 Z" fill="#444"/></svg>
<div class="t" style="left:1683.0px;top:477.8px;font-size:30px;color:#595959;transform:scaleX(0.935);">%</div>
<svg class="r" style="left:1727px;top:483px;" width="13" height="19" viewBox="0 0 13 19"><circle cx="7" cy="5.5" r="5" fill="#595959"/><path d="M12 6 Q13 15 1 18 L0.5 16.5 Q7 14 7 9 Z" fill="#595959"/></svg>
<div class="r" style="left:1757px;top:476px;width:1px;height:36px;background:#d0d0d0;"></div>
<svg class="r" style="left:1765px;top:477px;" width="32" height="32" viewBox="0 0 32 32"><path d="M14 8 H4 M8 3.5 L3 8 L8 12.5" stroke="#3f7dc0" stroke-width="3" fill="none"/><text x="14.5" y="14" font-size="16.5" fill="#595959" font-family="Liberation Sans">.0</text><text x="5" y="29" font-size="16.5" fill="#595959" font-family="Liberation Sans">.00</text></svg>
<svg class="r" style="left:1802px;top:477px;" width="34" height="32" viewBox="0 0 34 32"><text x="5" y="14" font-size="16.5" fill="#595959" font-family="Liberation Sans">.00</text><path d="M3 23 H14 M10 18.5 L15 23 L10 27.5" stroke="#3f7dc0" stroke-width="3" fill="none"/><text x="15.5" y="29" font-size="16.5" fill="#595959" font-family="Liberation Sans">.0</text></svg>
<svg class="r" style="left:1889px;top:406px;" width="62" height="62" viewBox="0 0 62 62"><rect x="1.5" y="2.5" width="51" height="46" fill="#fff" stroke="#777" stroke-width="1.3"/><rect x="15" y="3" width="15" height="11" fill="#d9623b"/><rect x="15" y="14.5" width="19" height="10.5" fill="#4a80ba"/><rect x="15" y="25.5" width="20" height="11" fill="#d9623b"/><rect x="15" y="37" width="13" height="11" fill="#4a80ba"/><path d="M14.6 2.5 V48.5 M39.5 2.5 V48.5 M1.5 14.3 H52.5 M1.5 25.5 H52.5 M1.5 37.3 H52.5" stroke="#999" stroke-width="1"/><rect x="28.5" y="35" width="30.5" height="23.5" fill="#fff" stroke="#777" stroke-width="1.3"/><path d="M36 44 H50 M36 51 H50 M40 57 L47 38" stroke="#333" stroke-width="1.8"/></svg>
<div class="t" style="left:1855.0px;top:471.3px;font-size:24px;color:#262626;transform:scaleX(1.023);">Conditional</div>
<div class="t" style="left:1850.0px;top:503.3px;font-size:24px;color:#262626;transform:scaleX(1.013);">Formatting</div>
<svg class="r" style="left:1973px;top:514px;" width="10" height="6" viewBox="0 0 10 6"><path d="M0 0 H10 L5 5 Z" fill="#444"/></svg>
<svg class="r" style="left:2010px;top:406px;" width="66" height="62" viewBox="0 0 66 62"><rect x="1.2" y="1.3" width="56.3" height="50" fill="#fff" stroke="#777" stroke-width="1.3"/><rect x="15.3" y="11.7" width="42" height="39.6" fill="#c3d6ea"/><path d="M15.3 1.3 V51.3 M29.2 1.3 V51.3 M43.2 1.3 V51.3 M1.2 11.7 H57.5 M1.2 21.8 H57.5 M1.2 31.8 H57.5 M1.2 41.6 H57.5" stroke="#999" stroke-width="1"/><path d="M47.5 29.5 L62 14 V28 L53 36 Z" fill="#808080"/><path d="M42 35 L49.5 42 L43 48 L35.5 41 Z" fill="#808080"/><path d="M17 59.5 L30 46 Q36 40 42 45 Q48 51 41 57 Q36 60 30 59.5 Z" fill="#4a80ba"/><path d="M31 44.5 Q37 40 42.5 45.5 Q47 51 42 55.5 Q39 50 31 44.5 Z" fill="#fff" stroke="#4a80ba" stroke-width="1.3"/></svg>
<div class="t" style="left:1989.0px;top:471.3px;font-size:24px;color:#262626;transform:scaleX(0.944);">Format as</div>
<div class="t" style="left:2005.0px;top:503.3px;font-size:24px;color:#262626;transform:scaleX(0.870);">Table</div>
<svg class="r" style="left:2067px;top:514px;" width="10" height="6" viewBox="0 0 10 6"><path d="M0 0 H10 L5 5 Z" fill="#444"/></svg>
<svg class="r" style="left:2107px;top:404px;" width="66" height="64" viewBox="0 0 66 64"><rect x="1.3" y="1.3" width="55.7" height="48" fill="#fff" stroke="#777" stroke-width="1.3"/><rect x="16.6" y="13.5" width="24.4" height="23" fill="#c3d6ea"/><path d="M16.6 1.3 V49.3 M41 1.3 V49.3 M1.3 13.5 H57 M1.3 36.5 H57" stroke="#999" stroke-width="1"/><g transform="translate(0,2)"><path d="M47.5 29.5 L62 14 V28 L53 36 Z" fill="#808080"/><path d="M42 35 L49.5 42 L43 48 L35.5 41 Z" fill="#808080"/><path d="M17 59.5 L30 46 Q36 40 42 45 Q48 51 41 57 Q36 60 30 59.5 Z" fill="#4a80ba"/><path d="M31 44.5 Q37 40 42.5 45.5 Q47 51 42 55.5 Q39 50 31 44.5 Z" fill="#fff" stroke="#4a80ba" stroke-width="1.3"/></g></svg>
<div class="t" style="left:2116.0px;top:471.3px;font-size:24px;color:#262626;transform:scaleX(1.146);">Cell</div>
<div class="t" style="left:2098.0px;top:503.3px;font-size:24px;color:#262626;transform:scaleX(0.920);">Styles</div>
<svg class="r" style="left:2165px;top:514px;" width="10" height="6" viewBox="0 0 10 6"><path d="M0 0 H10 L5 5 Z" fill="#444"/></svg>
<svg class="r" style="left:2192px;top:403px;" width="60" height="60" viewBox="0 0 60 60"><rect x="6.5" y="2.5" width="30.5" height="11" fill="#fff" stroke="#777" stroke-width="1.3"/><path d="M21.7 2.5 V13.5" stroke="#777" stroke-width="1.2"/><rect x="28.5" y="18.5" width="28.5" height="12" fill="#c3d6ea" stroke="#777" stroke-width="1.3"/><path d="M42.7 18.5 V30.5" stroke="#777" stroke-width="1.2"/><path d="M20 24.5 H5 M10.5 18.5 L4 24.5 L10.5 30.5" stroke="#4a80ba" stroke-width="3.5" fill="none"/><rect x="6.5" y="35.5" width="30.5" height="22" fill="#fff" stroke="#777" stroke-width="1.3"/><path d="M21.7 35.5 V57.5 M6.5 46.5 H37" stroke="#777" stroke-width="1.2"/></svg>
<div class="t" style="left:2195.0px;top:471.3px;font-size:24px;color:#262626;transform:scaleX(0.967);">Insert</div>
<svg class="r" style="left:2219px;top:514px;" width="10" height="6" viewBox="0 0 10 6"><path d="M0 0 H10 L5 5 Z" fill="#444"/></svg>
<svg class="r" style="left:2268px;top:403px;" width="64" height="60" viewBox="0 0 64 60"><rect x="2.5" y="2.5" width="30.5" height="11" fill="#fff" stroke="#777" stroke-width="1.3"/><path d="M17.7 2.5 V13.5" stroke="#777" stroke-width="1.2"/><path d="M13.5 18.5 H40 L46 24.5 L40 30.5 H13.5 Z" fill="#c3d6ea" stroke="#777" stroke-width="1.3"/><path d="M27.7 18.5 V30.5" stroke="#777" stroke-width="1.2"/><rect x="2.5" y="35.5" width="30.5" height="22" fill="#fff" stroke="#777" stroke-width="1.3"/><path d="M17.7 35.5 V57.5 M2.5 46.5 H33" stroke="#777" stroke-width="1.2"/><path d="M33 15 Q45 24 58 42" stroke="#d9623b" stroke-width="3.8" fill="none" stroke-linecap="round"/><path d="M60 19 Q44 25 33 40" stroke="#d9623b" stroke-width="3.8" fill="none" stroke-linecap="round"/></svg>
<div class="t" style="left:2264.0px;top:471.3px;font-size:24px;color:#262626;transform:scaleX(0.986);">Delete</div>
<svg class="r" style="left:2293px;top:514px;" width="10" height="6" viewBox="0 0 10 6"><path d="M0 0 H10 L5 5 Z" fill="#444"/></svg>
<svg class="r" style="left:2347px;top:402px;" width="58" height="62" viewBox="0 0 58 62"><path d="M2.5 2 V10 M46 2 V10" stroke="#4a80ba" stroke-width="1.3"/><path d="M6 6 H42 M11 2 L6 6 L11 10 M37 2 L42 6 L37 10" stroke="#4a80ba" stroke-width="2.4" fill="none"/><path d="M2.5 15.5 H54.5 V51.5 L49 51.5 L44 57.5 H32 Q30 57.5 30 55 V51.5 L24 57.5 H5 Q2.5 57.5 2.5 55 Z" fill="#fff" stroke="#777" stroke-width="1.3"/><path d="M16.5 15.5 V51.5 M30 15.5 V51.5 M43.5 15.5 V51.5 M2.5 25 H54.5 M2.5 43 H54.5 M2.5 51.5 H54.5" stroke="#999" stroke-width="1"/><rect x="17" y="25.5" width="13" height="17.5" fill="#4a80ba"/></svg>
<div class="t" style="left:2338.0px;top:471.3px;font-size:24px;color:#262626;transform:scaleX(0.987);">Format</div>
<svg class="r" style="left:2371px;top:514px;" width="10" height="6" viewBox="0 0 10 6"><path d="M0 0 H10 L5 5 Z" fill="#444"/></svg>
<svg class="r" style="left:2431px;top:402px;" width="28" height="30" viewBox="0 0 28 30"><path d="M24 7.5 V4 H3.5 L13.5 15 L3.5 26 H24 V22.5" stroke="#555" stroke-width="4.2" fill="none" stroke-linejoin="miter"/></svg>
<div class="t" style="left:2464.0px;top:405.3px;font-size:24px;color:#262626;transform:scaleX(0.985);">AutoSum</div>
<svg class="r" style="left:2571px;top:419px;" width="10" height="6" viewBox="0 0 10 6"><path d="M0 0 H10 L5 5 Z" fill="#444"/></svg>
<svg class="r" style="left:2429px;top:441px;" width="30" height="30" viewBox="0 0 30 30"><rect x="1.5" y="3" width="27" height="25" fill="#fff" stroke="#777" stroke-width="1.2"/><rect x="1" y="1" width="28" height="5" fill="#757575"/><path d="M12.5 8 H17 V19 L22 14.5 V20 L14.75 26.5 L7.5 20 V14.5 L12.5 19 Z" fill="#4a80ba"/></svg>
<div class="t" style="left:2464.0px;top:444.3px;font-size:24px;color:#262626;transform:scaleX(0.918);">Fill</div>
<svg class="r" style="left:2500px;top:458px;" width="10" height="6" viewBox="0 0 10 6"><path d="M0 0 H10 L5 5 Z" fill="#444"/></svg>
<svg class="r" style="left:2432px;top:482px;" width="26" height="26" viewBox="0 0 26 26"><path d="M1.5 18 L16 3.5 Q18 1.5 20 3.5 L23.5 7 Q25.5 9 23.5 11 L9 25.5 Q7 27 5 25.5 L1.5 22 Q0 20 1.5 18 Z" fill="#e8848f"/><path d="M3 16.5 L10.5 24" stroke="#f3f3f3" stroke-width="1.8"/></svg>
<div class="t" style="left:2464.0px;top:483.3px;font-size:24px;color:#262626;transform:scaleX(0.930);">Clear</div>
<svg class="r" style="left:2525px;top:497px;" width="10" height="6" viewBox="0 0 10 6"><path d="M0 0 H10 L5 5 Z" fill="#444"/></svg>
<div class="t" style="left:2596.5px;top:402.7px;font-size:29px;color:#4a80ba;font-weight:bold;transform:scaleX(0.905);">A</div>
<div class="t" style="left:2597.5px;top:430.7px;font-size:29px;color:#9a60c0;font-weight:bold;transform:scaleX(0.986);">Z</div>
<svg class="r" style="left:2619px;top:420px;" width="34" height="34" viewBox="0 0 34 34"><path d="M1 1.5 H33 L20 15 V32.5 H14 V15 Z" fill="#7a7a7a"/><path d="M4 3.5 L16 15.5 V31" stroke="#f3f3f3" stroke-width="1.2" fill="none"/></svg>
<div class="t" style="left:2590.0px;top:471.3px;font-size:24px;color:#262626;transform:scaleX(1.019);">Sort &amp;</div>
<div class="t" style="left:2590.0px;top:503.3px;font-size:24px;color:#262626;transform:scaleX(1.089);">Filter</div>
<svg class="r" style="left:2650px;top:514px;" width="10" height="6" viewBox="0 0 10 6"><path d="M0 0 H10 L5 5 Z" fill="#444"/></svg>
<svg class="r" style="left:2676px;top:402px;" width="58" height="58" viewBox="0 0 58 58"><circle cx="35" cy="22.8" r="18" fill="#fff" stroke="#4a80ba" stroke-width="4.2"/><path d="M22 36 L7 50.5" stroke="#4a80ba" stroke-width="6" stroke-linecap="round"/></svg>
<div class="t" style="left:2669.0px;top:471.3px;font-size:24px;color:#262626;transform:scaleX(1.040);">Find &amp;</div>
<div class="t" style="left:2665.0px;top:503.3px;font-size:24px;color:#262626;transform:scaleX(0.947);">Select</div>
<svg class="r" style="left:2737px;top:514px;" width="10" height="6" viewBox="0 0 10 6"><path d="M0 0 H10 L5 5 Z" fill="#444"/></svg>
<svg class="r" style="left:2872px;top:544px;" width="18" height="11" viewBox="0 0 18 11"><path d="M2 9 L9 2 L16 9" stroke="#444" stroke-width="2" fill="none"/></svg>
<div class="r" style="left:542px;top:567px;width:2360px;height:1220px;background:#e6e6e6;box-sizing:border-box;"></div>
<div class="r" style="left:553px;top:587px;width:202px;height:44px;background:#ffffff;box-sizing:border-box;border:1px solid #c6c6c6;"></div>
<div class="t" style="left:561.0px;top:596.3px;font-size:24px;color:#262626;transform:scaleX(0.885);">C1</div>
<svg class="r" style="left:728px;top:603px;" width="16" height="9" viewBox="0 0 16 9"><path d="M0 0 H15 L7.5 8 Z" fill="#6d6d6d"/></svg>
<div class="r" style="left:783px;top:599px;width:4px;height:4px;background:#9a9a9a;"></div>
<div class="r" style="left:783px;top:608px;width:4px;height:4px;background:#9a9a9a;"></div>
<div class="r" style="left:783px;top:617px;width:4px;height:4px;background:#9a9a9a;"></div>
<div class="r" style="left:815px;top:587px;width:218px;height:44px;background:#ffffff;box-sizing:border-box;border:1px solid #c6c6c6;"></div>
<svg class="r" style="left:839px;top:598px;" width="28" height="26" viewBox="0 0 28 26"><path d="M3 3 Q14 10 23 24" stroke="#c4c4c4" stroke-width="2.6" fill="none" stroke-linecap="round"/><path d="M23 3 Q10 8 3 22" stroke="#c4c4c4" stroke-width="2.6" fill="none" stroke-linecap="round"/></svg>
<svg class="r" style="left:910px;top:597px;" width="30" height="26" viewBox="0 0 30 26"><path d="M4 13 L11 20 L25 4" stroke="#c4c4c4" stroke-width="4.5" fill="none" stroke-linecap="round" stroke-linejoin="round"/></svg>
<div class="t" style="left:982.0px;top:589.1px;font-size:33px;color:#6d6d6d;font-style:italic;transform:scaleX(0.972);font-family:'Liberation Serif'">fx</div>
<div class="r" style="left:1039px;top:587px;width:1854px;height:44px;background:#ffffff;box-sizing:border-box;border:1px solid #c6c6c6;"></div>
<div class="t" style="left:1061.0px;top:597.3px;font-size:24px;color:#262626;transform:scaleX(1.069);">sum(Expression1)</div>
<svg class="r" style="left:2863px;top:603px;" width="22" height="14" viewBox="0 0 22 14"><path d="M2 2 L11 11 L20 2" stroke="#6d6d6d" stroke-width="3.5" fill="none"/></svg>
<div class="r" style="left:543px;top:651px;width:2321px;height:37px;background:#e6e6e6;box-sizing:border-box;"></div>
<div class="r" style="left:800px;top:651px;width:247px;height:37px;background:#d3f0e0;box-sizing:border-box;"></div>
<div class="r" style="left:596px;top:651px;width:1px;height:37px;background:#c8c8c8;"></div>
<div class="r" style="left:698px;top:651px;width:1px;height:37px;background:#c8c8c8;"></div>
<div class="r" style="left:800px;top:651px;width:1px;height:37px;background:#c8c8c8;"></div>
<div class="r" style="left:1047px;top:651px;width:1px;height:37px;background:#c8c8c8;"></div>
<div class="r" style="left:1183px;top:651px;width:1px;height:37px;background:#c8c8c8;"></div>
<div class="r" style="left:1319px;top:651px;width:1px;height:37px;background:#c8c8c8;"></div>
<div class="r" style="left:1455px;top:651px;width:1px;height:37px;background:#c8c8c8;"></div>
<div class="r" style="left:1591px;top:651px;width:1px;height:37px;background:#c8c8c8;"></div>
<div class="r" style="left:1727px;top:651px;width:1px;height:37px;background:#c8c8c8;"></div>
<div class="r" style="left:1863px;top:651px;width:1px;height:37px;background:#c8c8c8;"></div>
<div class="r" style="left:1999px;top:651px;width:1px;height:37px;background:#c8c8c8;"></div>
<div class="r" style="left:2135px;top:651px;width:1px;height:37px;background:#c8c8c8;"></div>
<div class="r" style="left:2271px;top:651px;width:1px;height:37px;background:#c8c8c8;"></div>
<div class="r" style="left:2407px;top:651px;width:1px;height:37px;background:#c8c8c8;"></div>
<div class="r" style="left:2543px;top:651px;width:1px;height:37px;background:#c8c8c8;"></div>
<div class="r" style="left:2679px;top:651px;width:1px;height:37px;background:#c8c8c8;"></div>
<div class="r" style="left:2815px;top:651px;width:1px;height:37px;background:#c8c8c8;"></div>
<div class="r" style="left:543px;top:687px;width:2321px;height:1px;background:#9b9b9b;"></div>
<div class="t" style="left:638.1px;top:657.5px;font-size:26.5px;color:#262626;">A</div>
<div class="t" style="left:740.1px;top:657.5px;font-size:26.5px;color:#262626;">B</div>
<div class="t" style="left:913.9px;top:657.5px;font-size:26.5px;color:#217346;">C</div>
<div class="t" style="left:1105.4px;top:657.5px;font-size:26.5px;color:#262626;">D</div>
<div class="t" style="left:1242.1px;top:657.5px;font-size:26.5px;color:#262626;">E</div>
<div class="t" style="left:1378.9px;top:657.5px;font-size:26.5px;color:#262626;">F</div>
<div class="t" style="left:1512.8px;top:657.5px;font-size:26.5px;color:#262626;">G</div>
<div class="t" style="left:1649.4px;top:657.5px;font-size:26.5px;color:#262626;">H</div>
<div class="t" style="left:1791.4px;top:657.5px;font-size:26.5px;color:#262626;">I</div>
<div class="t" style="left:1924.4px;top:657.5px;font-size:26.5px;color:#262626;">J</div>
<div class="t" style="left:2058.1px;top:657.5px;font-size:26.5px;color:#262626;">K</div>
<div class="t" style="left:2195.6px;top:657.5px;font-size:26.5px;color:#262626;">L</div>
<div class="t" style="left:2328.0px;top:657.5px;font-size:26.5px;color:#262626;">M</div>
<div class="t" style="left:2465.4px;top:657.5px;font-size:26.5px;color:#262626;">N</div>
<div class="t" style="left:2600.8px;top:657.5px;font-size:26.5px;color:#262626;">O</div>
<div class="t" style="left:2738.1px;top:657.5px;font-size:26.5px;color:#262626;">P</div>
<svg class="r" style="left:563px;top:655px;" width="30" height="30" viewBox="0 0 30 30"><path d="M29 0 V29 H0 Z" fill="#b4b4b4"/></svg>
<div class="r" style="left:596px;top:688px;width:2268px;height:1065px;background:#ffffff;box-sizing:border-box;"></div>
<div class="r" style="left:543px;top:688px;width:52px;height:1065px;background:#d2d2d2;box-sizing:border-box;"></div>
<div class="r" style="left:800px;top:726px;width:247px;height:1027px;background:#c6c6c6;box-sizing:border-box;"></div>
<div class="r" style="left:596px;top:725px;width:204px;height:1px;background:#d4d4d4;"></div>
<div class="r" style="left:1047px;top:725px;width:1817px;height:1px;background:#d4d4d4;"></div>
<div class="r" style="left:800px;top:725px;width:247px;height:1px;background:#d4d4d4;"></div>
<div class="r" style="left:543px;top:725px;width:52px;height:1px;background:#b0b0b0;"></div>
<div class="r" style="left:596px;top:763px;width:204px;height:1px;background:#d4d4d4;"></div>
<div class="r" style="left:1047px;top:763px;width:1817px;height:1px;background:#d4d4d4;"></div>
<div class="r" style="left:800px;top:763px;width:247px;height:1px;background:#a8a8a8;"></div>
<div class="r" style="left:543px;top:763px;width:52px;height:1px;background:#b0b0b0;"></div>
<div class="r" style="left:596px;top:801px;width:204px;height:1px;background:#d4d4d4;"></div>
<div class="r" style="left:1047px;top:801px;width:1817px;height:1px;background:#d4d4d4;"></div>
<div class="r" style="left:800px;top:801px;width:247px;height:1px;background:#a8a8a8;"></div>
<div class="r" style="left:543px;top:801px;width:52px;height:1px;background:#b0b0b0;"></div>
<div class="r" style="left:596px;top:839px;width:204px;height:1px;background:#d4d4d4;"></div>
<div class="r" style="left:1047px;top:839px;width:1817px;height:1px;background:#d4d4d4;"></div>
<div class="r" style="left:800px;top:839px;width:247px;height:1px;background:#a8a8a8;"></div>
<div class="r" style="left:543px;top:839px;width:52px;height:1px;background:#b0b0b0;"></div>
<div class="r" style="left:596px;top:877px;width:204px;height:1px;background:#d4d4d4;"></div>
<div class="r" style="left:1047px;top:877px;width:1817px;height:1px;background:#d4d4d4;"></div>
<div class="r" style="left:800px;top:877px;width:247px;height:1px;background:#a8a8a8;"></div>
<div class="r" style="left:543px;top:877px;width:52px;height:1px;background:#b0b0b0;"></div>
<div class="r" style="left:596px;top:915px;width:204px;height:1px;background:#d4d4d4;"></div>
<div class="r" style="left:1047px;top:915px;width:1817px;height:1px;background:#d4d4d4;"></div>
<div class="r" style="left:800px;top:915px;width:247px;height:1px;background:#a8a8a8;"></div>
<div class="r" style="left:543px;top:915px;width:52px;height:1px;background:#b0b0b0;"></div>
<div class="r" style="left:596px;top:953px;width:204px;height:1px;background:#d4d4d4;"></div>
<div class="r" style="left:1047px;top:953px;width:1817px;height:1px;background:#d4d4d4;"></div>
<div class="r" style="left:800px;top:953px;width:247px;height:1px;background:#a8a8a8;"></div>
<div class="r" style="left:543px;top:953px;width:52px;height:1px;background:#b0b0b0;"></div>
<div class="r" style="left:596px;top:991px;width:204px;height:1px;background:#d4d4d4;"></div>
<div class="r" style="left:1047px;top:991px;width:1817px;height:1px;background:#d4d4d4;"></div>
<div class="r" style="left:800px;top:991px;width:247px;height:1px;background:#a8a8a8;"></div>
<div class="r" style="left:543px;top:991px;width:52px;height:1px;background:#b0b0b0;"></div>
<div class="r" style="left:596px;top:1029px;width:204px;height:1px;background:#d4d4d4;"></div>
<div class="r" style="left:1047px;top:1029px;width:1817px;height:1px;background:#d4d4d4;"></div>
<div class="r" style="left:800px;top:1029px;width:247px;height:1px;background:#a8a8a8;"></div>
<div class="r" style="left:543px;top:1029px;width:52px;height:1px;background:#b0b0b0;"></div>
<div class="r" style="left:596px;top:1067px;width:204px;height:1px;background:#d4d4d4;"></div>
<div class="r" style="left:1047px;top:1067px;width:1817px;height:1px;background:#d4d4d4;"></div>
<div class="r" style="left:800px;top:1067px;width:247px;height:1px;background:#a8a8a8;"></div>
<div class="r" style="left:543px;top:1067px;width:52px;height:1px;background:#b0b0b0;"></div>
<div class="r" style="left:596px;top:1105px;width:204px;height:1px;background:#d4d4d4;"></div>
<div class="r" style="left:1047px;top:1105px;width:1817px;height:1px;background:#d4d4d4;"></div>
<div class="r" style="left:800px;top:1105px;width:247px;height:1px;background:#a8a8a8;"></div>
<div class="r" style="left:543px;top:1105px;width:52px;height:1px;background:#b0b0b0;"></div>
<div class="r" style="left:596px;top:1143px;width:204px;height:1px;background:#d4d4d4;"></div>
<div class="r" style="left:1047px;top:1143px;width:1817px;height:1px;background:#d4d4d4;"></div>
<div class="r" style="left:800px;top:1143px;width:247px;height:1px;background:#a8a8a8;"></div>
<div class="r" style="left:543px;top:1143px;width:52px;height:1px;background:#b0b0b0;"></div>
<div class="r" style="left:596px;top:1182px;width:204px;height:1px;background:#d4d4d4;"></div>
<div class="r" style="left:1047px;top:1182px;width:1817px;height:1px;background:#d4d4d4;"></div>
<div class="r" style="left:800px;top:1182px;width:247px;height:1px;background:#a8a8a8;"></div>
<div class="r" style="left:543px;top:1182px;width:52px;height:1px;background:#b0b0b0;"></div>
<div class="r" style="left:596px;top:1220px;width:204px;height:1px;background:#d4d4d4;"></div>
<div class="r" style="left:1047px;top:1220px;width:1817px;height:1px;background:#d4d4d4;"></div>
<div class="r" style="left:800px;top:1220px;width:247px;height:1px;background:#a8a8a8;"></div>
<div class="r" style="left:543px;top:1220px;width:52px;height:1px;background:#b0b0b0;"></div>
<div class="r" style="left:596px;top:1258px;width:204px;height:1px;background:#d4d4d4;"></div>
<div class="r" style="left:1047px;top:1258px;width:1817px;height:1px;background:#d4d4d4;"></div>
<div class="r" style="left:800px;top:1258px;width:247px;height:1px;background:#a8a8a8;"></div>
<div class="r" style="left:543px;top:1258px;width:52px;height:1px;background:#b0b0b0;"></div>
<div class="r" style="left:596px;top:1296px;width:204px;height:1px;background:#d4d4d4;"></div>
<div class="r" style="left:1047px;top:1296px;width:1817px;height:1px;background:#d4d4d4;"></div>
<div class="r" style="left:800px;top:1296px;width:247px;height:1px;background:#a8a8a8;"></div>
<div class="r" style="left:543px;top:1296px;width:52px;height:1px;background:#b0b0b0;"></div>
<div class="r" style="left:596px;top:1334px;width:204px;height:1px;background:#d4d4d4;"></div>
<div class="r" style="left:1047px;top:1334px;width:1817px;height:1px;background:#d4d4d4;"></div>
<div class="r" style="left:800px;top:1334px;width:247px;height:1px;background:#a8a8a8;"></div>
<div class="r" style="left:543px;top:1334px;width:52px;height:1px;background:#b0b0b0;"></div>
<div class="r" style="left:596px;top:1372px;width:204px;height:1px;background:#d4d4d4;"></div>
<div class="r" style="left:1047px;top:1372px;width:1817px;height:1px;background:#d4d4d4;"></div>
<div class="r" style="left:800px;top:1372px;width:247px;height:1px;background:#a8a8a8;"></div>
<div class="r" style="left:543px;top:1372px;width:52px;height:1px;background:#b0b0b0;"></div>
<div class="r" style="left:596px;top:1410px;width:204px;height:1px;background:#d4d4d4;"></div>
<div class="r" style="left:1047px;top:1410px;width:1817px;height:1px;background:#d4d4d4;"></div>
<div class="r" style="left:800px;top:1410px;width:247px;height:1px;background:#a8a8a8;"></div>
<div class="r" style="left:543px;top:1410px;width:52px;height:1px;background:#b0b0b0;"></div>
<div class="r" style="left:596px;top:1448px;width:204px;height:1px;background:#d4d4d4;"></div>
<div class="r" style="left:1047px;top:1448px;width:1817px;height:1px;background:#d4d4d4;"></div>
<div class="r" style="left:800px;top:1448px;width:247px;height:1px;background:#a8a8a8;"></div>
<div class="r" style="left:543px;top:1448px;width:52px;height:1px;background:#b0b0b0;"></div>
<div class="r" style="left:596px;top:1486px;width:204px;height:1px;background:#d4d4d4;"></div>
<div class="r" style="left:1047px;top:1486px;width:1817px;height:1px;background:#d4d4d4;"></div>
<div class="r" style="left:800px;top:1486px;width:247px;height:1px;background:#a8a8a8;"></div>
<div class="r" style="left:543px;top:1486px;width:52px;height:1px;background:#b0b0b0;"></div>
<div class="r" style="left:596px;top:1524px;width:204px;height:1px;background:#d4d4d4;"></div>
<div class="r" style="left:1047px;top:1524px;width:1817px;height:1px;background:#d4d4d4;"></div>
<div class="r" style="left:800px;top:1524px;width:247px;height:1px;background:#a8a8a8;"></div>
<div class="r" style="left:543px;top:1524px;width:52px;height:1px;background:#b0b0b0;"></div>
<div class="r" style="left:596px;top:1562px;width:204px;height:1px;background:#d4d4d4;"></div>
<div class="r" style="left:1047px;top:1562px;width:1817px;height:1px;background:#d4d4d4;"></div>
<div class="r" style="left:800px;top:1562px;width:247px;height:1px;background:#a8a8a8;"></div>
<div class="r" style="left:543px;top:1562px;width:52px;height:1px;background:#b0b0b0;"></div>
<div class="r" style="left:596px;top:1600px;width:204px;height:1px;background:#d4d4d4;"></div>
<div class="r" style="left:1047px;top:1600px;width:1817px;height:1px;background:#d4d4d4;"></div>
<div class="r" style="left:800px;top:1600px;width:247px;height:1px;background:#a8a8a8;"></div>
<div class="r" style="left:543px;top:1600px;width:52px;height:1px;background:#b0b0b0;"></div>
<div class="r" style="left:596px;top:1638px;width:204px;height:1px;background:#d4d4d4;"></div>
<div class="r" style="left:1047px;top:1638px;width:1817px;height:1px;background:#d4d4d4;"></div>
<div class="r" style="left:800px;top:1638px;width:247px;height:1px;background:#a8a8a8;"></div>
<div class="r" style="left:543px;top:1638px;width:52px;height:1px;background:#b0b0b0;"></div>
<div class="r" style="left:596px;top:1676px;width:204px;height:1px;background:#d4d4d4;"></div>
<div class="r" style="left:1047px;top:1676px;width:1817px;height:1px;background:#d4d4d4;"></div>
<div class="r" style="left:800px;top:1676px;width:247px;height:1px;background:#a8a8a8;"></div>
<div class="r" style="left:543px;top:1676px;width:52px;height:1px;background:#b0b0b0;"></div>
<div class="r" style="left:596px;top:1714px;width:204px;height:1px;background:#d4d4d4;"></div>
<div class="r" style="left:1047px;top:1714px;width:1817px;height:1px;background:#d4d4d4;"></div>
<div class="r" style="left:800px;top:1714px;width:247px;height:1px;background:#a8a8a8;"></div>
<div class="r" style="left:543px;top:1714px;width:52px;height:1px;background:#b0b0b0;"></div>
<div class="r" style="left:596px;top:1752px;width:204px;height:1px;background:#d4d4d4;"></div>
<div class="r" style="left:1047px;top:1752px;width:1817px;height:1px;background:#d4d4d4;"></div>
<div class="r" style="left:800px;top:1752px;width:247px;height:1px;background:#a8a8a8;"></div>
<div class="r" style="left:543px;top:1752px;width:52px;height:1px;background:#b0b0b0;"></div>
<div class="r" style="left:698px;top:688px;width:1px;height:1065px;background:#d4d4d4;"></div>
<div class="r" style="left:1183px;top:688px;width:1px;height:1065px;background:#d4d4d4;"></div>
<div class="r" style="left:1319px;top:688px;width:1px;height:1065px;background:#d4d4d4;"></div>
<div class="r" style="left:1455px;top:688px;width:1px;height:1065px;background:#d4d4d4;"></div>
<div class="r" style="left:1591px;top:688px;width:1px;height:1065px;background:#d4d4d4;"></div>
<div class="r" style="left:1727px;top:688px;width:1px;height:1065px;background:#d4d4d4;"></div>
<div class="r" style="left:1863px;top:688px;width:1px;height:1065px;background:#d4d4d4;"></div>
<div class="r" style="left:1999px;top:688px;width:1px;height:1065px;background:#d4d4d4;"></div>
<div class="r" style="left:2135px;top:688px;width:1px;height:1065px;background:#d4d4d4;"></div>
<div class="r" style="left:2271px;top:688px;width:1px;height:1065px;background:#d4d4d4;"></div>
<div class="r" style="left:2407px;top:688px;width:1px;height:1065px;background:#d4d4d4;"></div>
<div class="r" style="left:2543px;top:688px;width:1px;height:1065px;background:#d4d4d4;"></div>
<div class="r" style="left:2679px;top:688px;width:1px;height:1065px;background:#d4d4d4;"></div>
<div class="r" style="left:2815px;top:688px;width:1px;height:1065px;background:#d4d4d4;"></div>
<div class="t" style="left:562.6px;top:692.8px;font-size:26.5px;color:#217346;">1</div>
<div class="t" style="left:562.6px;top:730.8px;font-size:26.5px;color:#217346;">2</div>
<div class="t" style="left:562.6px;top:768.8px;font-size:26.5px;color:#217346;">3</div>
<div class="t" style="left:562.6px;top:806.8px;font-size:26.5px;color:#217346;">4</div>
<div class="t" style="left:562.6px;top:844.8px;font-size:26.5px;color:#217346;">5</div>
<div class="t" style="left:562.6px;top:882.8px;font-size:26.5px;color:#217346;">6</div>
<div class="t" style="left:562.6px;top:920.8px;font-size:26.5px;color:#217346;">7</div>
<div class="t" style="left:562.6px;top:958.8px;font-size:26.5px;color:#217346;">8</div>
<div class="t" style="left:562.6px;top:996.8px;font-size:26.5px;color:#217346;">9</div>
<div class="t" style="left:555.2px;top:1034.8px;font-size:26.5px;color:#217346;">10</div>
<div class="t" style="left:555.2px;top:1072.8px;font-size:26.5px;color:#217346;">11</div>
<div class="t" style="left:555.2px;top:1110.8px;font-size:26.5px;color:#217346;">12</div>
<div class="t" style="left:555.2px;top:1148.8px;font-size:26.5px;color:#217346;">13</div>
<div class="t" style="left:555.2px;top:1187.8px;font-size:26.5px;color:#217346;">14</div>
<div class="t" style="left:555.2px;top:1225.8px;font-size:26.5px;color:#217346;">15</div>
<div class="t" style="left:555.2px;top:1263.8px;font-size:26.5px;color:#217346;">16</div>
<div class="t" style="left:555.2px;top:1301.8px;font-size:26.5px;color:#217346;">17</div>
<div class="t" style="left:555.2px;top:1339.8px;font-size:26.5px;color:#217346;">18</div>
<div class="t" style="left:555.2px;top:1377.8px;font-size:26.5px;color:#217346;">19</div>
<div class="t" style="left:555.2px;top:1415.8px;font-size:26.5px;color:#217346;">20</div>
<div class="t" style="left:555.2px;top:1453.8px;font-size:26.5px;color:#217346;">21</div>
<div class="t" style="left:555.2px;top:1491.8px;font-size:26.5px;color:#217346;">22</div>
<div class="t" style="left:555.2px;top:1529.8px;font-size:26.5px;color:#217346;">23</div>
<div class="t" style="left:555.2px;top:1567.8px;font-size:26.5px;color:#217346;">24</div>
<div class="t" style="left:555.2px;top:1605.8px;font-size:26.5px;color:#217346;">25</div>
<div class="t" style="left:555.2px;top:1643.8px;font-size:26.5px;color:#217346;">26</div>
<div class="t" style="left:555.2px;top:1681.8px;font-size:26.5px;color:#217346;">27</div>
<div class="t" style="left:555.2px;top:1719.8px;font-size:26.5px;color:#217346;">28</div>
<div class="r" style="left:594px;top:688px;width:3px;height:1065px;background:#217346;"></div>
<div class="r" style="left:798px;top:688px;width:3px;height:1065px;background:#217346;"></div>
<div class="r" style="left:1047px;top:688px;width:3px;height:1065px;background:#217346;"></div>
<div class="r" style="left:798px;top:687px;width:252px;height:3px;background:#217346;"></div>
<div class="r" style="left:1042px;top:687px;width:10px;height:8px;background:#217346;box-sizing:border-box;"></div>
<div class="r" style="left:1046px;top:695px;width:6px;height:2px;background:#ffffff;"></div>
<div class="t" style="left:602.0px;top:695.3px;font-size:24px;color:#000;transform:scaleX(1.076);">Dim1</div>
<div class="t" style="left:598.0px;top:698.3px;font-size:24px;color:#000;"></div>
<div class="t" style="left:699.0px;top:695.3px;font-size:24px;color:#000;transform:scaleX(1.166);">Dim2</div>
<div class="t" style="left:805.5px;top:695.3px;font-size:24px;color:#000;transform:scaleX(1.064);">sum(Expression1)</div>
<div class="t" style="left:602.0px;top:733.3px;font-size:24px;color:#000;transform:scaleX(1.075);">&lt;Dim1&gt;</div>
<div class="t" style="left:703.0px;top:733.3px;font-size:24px;color:#000;transform:scaleX(1.075);">&lt;Dim2&gt;</div>
<div class="t" style="left:805.0px;top:733.3px;font-size:24px;color:#000;transform:scaleX(1.065);">&lt;sum(Expression1)&gt;</div>
<div class="r" style="left:2863px;top:688px;width:1px;height:1066px;background:#ababab;"></div>
<div class="r" style="left:2864px;top:651px;width:38px;height:1102px;background:#e6e6e6;box-sizing:border-box;"></div>
<div class="r" style="left:2866px;top:652px;width:33px;height:33px;background:#ffffff;box-sizing:border-box;border:1px solid #c6c6c6;"></div>
<svg class="r" style="left:2873px;top:664px;" width="18" height="10" viewBox="0 0 18 10"><path d="M0 9 L9 0 L18 9 Z" fill="#7a7a7a"/></svg>
<div class="r" style="left:2866px;top:686px;width:33px;height:997px;background:#ffffff;box-sizing:border-box;border:1px solid #c6c6c6;"></div>
<div class="r" style="left:2866px;top:1722px;width:33px;height:33px;background:#ffffff;box-sizing:border-box;border:1px solid #c6c6c6;"></div>
<svg class="r" style="left:2873px;top:1734px;" width="18" height="10" viewBox="0 0 18 10"><path d="M0 0 H18 L9 9 Z" fill="#7a7a7a"/></svg>
<div class="r" style="left:543px;top:1752px;width:2321px;height:1px;background:#b8b8b8;"></div>
<div class="r" style="left:543px;top:1753px;width:2359px;height:34px;background:#e6e6e6;box-sizing:border-box;"></div>
<svg class="r" style="left:575px;top:1766px;" width="10" height="18" viewBox="0 0 10 18"><path d="M9 0 V17 L0 8.5 Z" fill="#c6c6c6"/></svg>
<svg class="r" style="left:619px;top:1766px;" width="10" height="18" viewBox="0 0 10 18"><path d="M0 0 V17 L9 8.5 Z" fill="#c6c6c6"/></svg>
<div class="r" style="left:689px;top:1752px;width:111px;height:37px;background:#ffffff;box-sizing:border-box;border:1px solid #c6c6c6;"></div>
<div class="t" style="left:701.0px;top:1759.3px;font-size:24px;color:#217346;font-weight:bold;transform:scaleX(1.057);">Sheet1</div>
<svg class="r" style="left:847px;top:1758px;" width="36" height="36" viewBox="0 0 36 36"><circle cx="18" cy="18" r="15" fill="none" stroke="#8a8a8a" stroke-width="2"/><path d="M18 10 V26 M10 18 H26" stroke="#8a8a8a" stroke-width="3"/></svg>
<div class="r" style="left:1954px;top:1763px;width:4px;height:4px;background:#9a9a9a;"></div>
<div class="r" style="left:1954px;top:1771px;width:4px;height:4px;background:#9a9a9a;"></div>
<div class="r" style="left:1954px;top:1779px;width:4px;height:4px;background:#9a9a9a;"></div>
<div class="r" style="left:1980px;top:1759px;width:32px;height:30px;background:#ffffff;box-sizing:border-box;border:1px solid #c6c6c6;"></div>
<svg class="r" style="left:1990px;top:1769px;" width="10" height="16" viewBox="0 0 10 16"><path d="M9 0 V16 L0 8 Z" fill="#6d6d6d"/></svg>
<div class="r" style="left:2012px;top:1759px;width:768px;height:30px;background:#ffffff;box-sizing:border-box;border:1px solid #c6c6c6;"></div>
<div class="r" style="left:2780px;top:1759px;width:52px;height:28px;background:#dadada;box-sizing:border-box;"></div>
<div class="r" style="left:2832px;top:1759px;width:32px;height:30px;background:#ffffff;box-sizing:border-box;border:1px solid #c6c6c6;"></div>
<svg class="r" style="left:2843px;top:1769px;" width="10" height="16" viewBox="0 0 10 16"><path d="M0 0 V16 L9 8 Z" fill="#6d6d6d"/></svg>
<div class="r" style="left:1057px;top:692px;width:984px;height:859px;box-shadow:0 6px 22px rgba(0,0,0,0.28)"></div>
<div class="r" style="left:1056px;top:691px;width:985px;height:861px;background:#f0f0f0;box-sizing:border-box;border:2px solid #0c78d6;"></div>
<div class="r" style="left:1058px;top:693px;width:981px;height:56px;background:#ffffff;box-sizing:border-box;"></div>
<div class="t" style="left:1071.0px;top:708.3px;font-size:24px;color:#000;transform:scaleX(0.994);">Edit Formatting Rule</div>
<div class="t" style="left:1893.0px;top:707.5px;font-size:26px;color:#000;transform:scaleX(1.034);">?</div>
<svg class="r" style="left:1981px;top:709px;" width="22" height="22" viewBox="0 0 22 22"><path d="M1 1 L21 21 M21 1 L1 21" stroke="#000" stroke-width="2"/></svg>
<div class="t" style="left:1071.0px;top:776.1px;font-size:22px;color:#000;transform:scaleX(0.896);">Select a Rule Type:</div>
<div class="r" style="left:1071px;top:799px;width:10px;height:1px;background:#000;"></div>
<div class="r" style="left:1071px;top:810px;width:958px;height:217px;background:#ffffff;box-sizing:border-box;border:2px solid #6d6d6d;"></div>
<div class="r" style="left:1073px;top:813px;width:954px;height:34px;background:#0078d7;box-sizing:border-box;"></div>
<svg class="r" style="left:1079px;top:827px;" width="16" height="10" viewBox="0 0 16 10"><path d="M0 0 L15 5 L0 10 Z" fill="#ffffff"/></svg>
<div class="t" style="left:1102.0px;top:820.1px;font-size:22px;color:#ffffff;transform:scaleX(0.937);">Format all cells based on their values</div>
<svg class="r" style="left:1079px;top:862px;" width="16" height="10" viewBox="0 0 16 10"><path d="M0 0 L15 5 L0 10 Z" fill="#000000"/></svg>
<div class="t" style="left:1102.0px;top:855.1px;font-size:22px;color:#000000;transform:scaleX(0.959);">Format only cells that contain</div>
<div class="r" style="left:1073px;top:882px;width:954px;height:1px;background:#ececec;"></div>
<svg class="r" style="left:1079px;top:897px;" width="16" height="10" viewBox="0 0 16 10"><path d="M0 0 L15 5 L0 10 Z" fill="#000000"/></svg>
<div class="t" style="left:1102.0px;top:890.1px;font-size:22px;color:#000000;transform:scaleX(0.959);">Format only top or bottom ranked values</div>
<div class="r" style="left:1073px;top:917px;width:954px;height:1px;background:#ececec;"></div>
<svg class="r" style="left:1079px;top:933px;" width="16" height="10" viewBox="0 0 16 10"><path d="M0 0 L15 5 L0 10 Z" fill="#000000"/></svg>
<div class="t" style="left:1102.0px;top:926.1px;font-size:22px;color:#000000;transform:scaleX(0.943);">Format only values that are above or below average</div>
<div class="r" style="left:1073px;top:953px;width:954px;height:1px;background:#ececec;"></div>
<svg class="r" style="left:1079px;top:968px;" width="16" height="10" viewBox="0 0 16 10"><path d="M0 0 L15 5 L0 10 Z" fill="#000000"/></svg>
<div class="t" style="left:1102.0px;top:961.1px;font-size:22px;color:#000000;transform:scaleX(0.950);">Format only unique or duplicate values</div>
<div class="r" style="left:1073px;top:988px;width:954px;height:1px;background:#ececec;"></div>
<svg class="r" style="left:1079px;top:1003px;" width="16" height="10" viewBox="0 0 16 10"><path d="M0 0 L15 5 L0 10 Z" fill="#000000"/></svg>
<div class="t" style="left:1102.0px;top:996.1px;font-size:22px;color:#000000;transform:scaleX(0.964);">Use a formula to determine which cells to format</div>
<div class="r" style="left:1073px;top:1023px;width:954px;height:1px;background:#ececec;"></div>
<div class="t" style="left:1071.0px;top:1045.1px;font-size:22px;color:#000;transform:scaleX(0.935);">Edit the Rule Description:</div>
<div class="r" style="left:1071px;top:1068px;width:10px;height:1px;background:#000;"></div>
<div class="r" style="left:1071px;top:1078px;width:958px;height:398px;background:#ffffff;box-sizing:border-box;border:1px solid #6e7585;"></div>
<div class="t" style="left:1080.0px;top:1092.1px;font-size:22px;color:#000;font-weight:bold;transform:scaleX(0.918);">Format all cells based on their values:</div>
<div class="t" style="left:1080.0px;top:1130.1px;font-size:22px;color:#000;transform:scaleX(0.912);">Format Style:</div>
<div class="r" style="left:1089px;top:1152px;width:12px;height:1px;background:#000;"></div>
<div class="r" style="left:1217px;top:1126px;width:256px;height:38px;background:#ffffff;box-sizing:border-box;border:1px solid #b4b4b4;"></div>
<div class="r" style="left:1437px;top:1128px;width:34px;height:34px;background:#e1e1e1;box-sizing:border-box;border:1px solid #c8c8c8;"></div>
<svg class="r" style="left:1445px;top:1139px;" width="18" height="11" viewBox="0 0 18 11"><path d="M2 2 L9 9 L16 2" stroke="#444" stroke-width="1.5" fill="none"/></svg>
<div class="t" style="left:1222.0px;top:1132.1px;font-size:22px;color:#000;transform:scaleX(0.896);">Icon Sets</div>
<div class="r" style="left:1491px;top:1127px;width:212px;height:50px;background:#e1e1e1;box-sizing:border-box;border:1px solid #adadad;"></div>
<div class="t" style="left:1509.0px;top:1141.1px;font-size:22px;color:#000;transform:scaleX(0.919);">Reverse Icon Order</div>
<div class="r" style="left:1655px;top:1163px;width:12px;height:1px;background:#000;"></div>
<div class="t" style="left:1080.0px;top:1190.1px;font-size:22px;color:#000;transform:scaleX(0.917);">Icon Style:</div>
<div class="r" style="left:1085px;top:1211px;width:10px;height:1px;background:#000;"></div>
<div class="r" style="left:1218px;top:1187px;width:254px;height:44px;background:#e1e1e1;box-sizing:border-box;border:1px solid #adadad;"></div>
<div class="r" style="left:1442px;top:1190px;width:1px;height:38px;background:#adadad;"></div>
<svg class="r" style="left:1448px;top:1204px;" width="16" height="9" viewBox="0 0 16 9"><path d="M0 0 H16 L8 8 Z" fill="#000"/></svg>
<svg class="r" style="left:1228px;top:1194px;" width="25" height="30" viewBox="0 0 25 30"><path d="M9.3 1 H15.9 V17.5 L24 9 V17.7 L12.6 29 L1 17.7 V9 L9.3 17.5 Z" fill="#e06848" stroke="#b23f25" stroke-width="1.2"/></svg>
<svg class="r" style="left:1266px;top:1196px;" width="30" height="25" viewBox="0 0 30 25"><path d="M1.1 9.1 H17 L9.1 1.2 H17.7 L28.7 12.5 L17.7 23.7 H9.1 L17 15.9 H1.1 Z" fill="#efc783" stroke="#ad8728" stroke-width="1.2"/></svg>
<svg class="r" style="left:1308px;top:1194px;" width="25" height="30" viewBox="0 0 25 30"><path d="M12.6 1 L23.7 12 V21 L15.9 11.3 V29 H9.3 V11.3 L1.1 21 V12 Z" fill="#7aab98" stroke="#2f6f5b" stroke-width="1.2" stroke-linejoin="miter"/></svg>
<div class="r" style="left:1490px;top:1192px;width:27px;height:27px;background:#ffffff;box-sizing:border-box;border:2px solid #333;"></div>
<div class="t" style="left:1528.0px;top:1194.1px;font-size:22px;color:#000;transform:scaleX(0.942);">Show Icon Only</div>
<div class="r" style="left:1585px;top:1216px;width:5px;height:1px;background:#000;"></div>
<div class="t" style="left:1080.0px;top:1242.1px;font-size:22px;color:#000;transform:scaleX(0.940);">Display each icon according to these rules:</div>
<div class="t" style="left:1080.0px;top:1280.1px;font-size:22px;color:#000;font-weight:bold;transform:scaleX(0.928);">Icon</div>
<div class="r" style="left:1109px;top:1302px;width:13px;height:1px;background:#000;"></div>
<div class="t" style="left:1597.0px;top:1280.1px;font-size:22px;color:#000;font-weight:bold;transform:scaleX(0.919);">Value</div>
<div class="r" style="left:1597px;top:1302px;width:11px;height:1px;background:#000;"></div>
<div class="t" style="left:1857.0px;top:1280.1px;font-size:22px;color:#000;font-weight:bold;transform:scaleX(0.893);">Type</div>
<div class="r" style="left:1857px;top:1302px;width:9px;height:1px;background:#000;"></div>
<div class="r" style="left:1079px;top:1315px;width:166px;height:44px;background:#e1e1e1;box-sizing:border-box;border:1px solid #adadad;"></div>
<div class="r" style="left:1215px;top:1318px;width:1px;height:38px;background:#adadad;"></div>
<svg class="r" style="left:1221px;top:1333px;" width="16" height="9" viewBox="0 0 16 9"><path d="M0 0 H16 L8 8 Z" fill="#000"/></svg>
<svg class="r" style="left:1135.5px;top:1322px;" width="25" height="30" viewBox="0 0 25 30"><path d="M12.6 1 L23.7 12 V21 L15.9 11.3 V29 H9.3 V11.3 L1.1 21 V12 Z" fill="#7aab98" stroke="#2f6f5b" stroke-width="1.2" stroke-linejoin="miter"/></svg>
<div class="t" style="left:1265.2px;top:1326.1px;font-size:22px;color:#000;transform:scaleX(0.920);">when value is</div>
<div class="r" style="left:1079px;top:1369px;width:166px;height:44px;background:#e1e1e1;box-sizing:border-box;border:1px solid #adadad;"></div>
<div class="r" style="left:1215px;top:1372px;width:1px;height:38px;background:#adadad;"></div>
<svg class="r" style="left:1221px;top:1387px;" width="16" height="9" viewBox="0 0 16 9"><path d="M0 0 H16 L8 8 Z" fill="#000"/></svg>
<svg class="r" style="left:1134px;top:1378.5px;" width="30" height="25" viewBox="0 0 30 25"><path d="M1.1 9.1 H17 L9.1 1.2 H17.7 L28.7 12.5 L17.7 23.7 H9.1 L17 15.9 H1.1 Z" fill="#efc783" stroke="#ad8728" stroke-width="1.2"/></svg>
<div class="t" style="left:1265.2px;top:1380.1px;font-size:22px;color:#000;transform:scaleX(0.935);">when &lt; 50000 and</div>
<div class="r" style="left:1079px;top:1424px;width:166px;height:44px;background:#e1e1e1;box-sizing:border-box;border:1px solid #adadad;"></div>
<div class="r" style="left:1215px;top:1427px;width:1px;height:38px;background:#adadad;"></div>
<svg class="r" style="left:1221px;top:1442px;" width="16" height="9" viewBox="0 0 16 9"><path d="M0 0 H16 L8 8 Z" fill="#000"/></svg>
<svg class="r" style="left:1135.5px;top:1430px;" width="25" height="30" viewBox="0 0 25 30"><path d="M9.3 1 H15.9 V17.5 L24 9 V17.7 L12.6 29 L1 17.7 V9 L9.3 17.5 Z" fill="#e06848" stroke="#b23f25" stroke-width="1.2"/></svg>
<div class="t" style="left:1265.2px;top:1435.1px;font-size:22px;color:#000;transform:scaleX(0.928);">when &lt; 10000</div>
<div class="r" style="left:1488px;top:1314px;width:90px;height:38px;background:#ffffff;box-sizing:border-box;border:1px solid #adadad;"></div>
<div class="r" style="left:1542px;top:1316px;width:34px;height:34px;background:#e1e1e1;box-sizing:border-box;border:1px solid #c8c8c8;"></div>
<svg class="r" style="left:1551px;top:1328px;" width="17" height="10" viewBox="0 0 17 10"><path d="M2 2 L8.5 8 L15 2" stroke="#444" stroke-width="1.5" fill="none"/></svg>
<div class="t" style="left:1495.0px;top:1322.1px;font-size:22px;color:#000;transform:scaleX(0.902);">&gt;=</div>
<div class="r" style="left:1595px;top:1314px;width:244px;height:38px;background:#ffffff;box-sizing:border-box;border:1px solid #adadad;"></div>
<div class="t" style="left:1600.0px;top:1322.1px;font-size:22px;color:#000;transform:scaleX(0.865);">50000</div>
<div class="r" style="left:1802px;top:1314px;width:37px;height:38px;background:#f0f0f0;box-sizing:border-box;border:2px solid #adadad;"></div>
<svg class="r" style="left:1810px;top:1317px;" width="22" height="32" viewBox="0 0 22 32"><path d="M11 3 L4 12 H9 V26 H13 V12 H18 Z" fill="#000"/><rect x="2" y="29" width="19" height="1.5" fill="#000"/></svg>
<div class="r" style="left:1856px;top:1314px;width:153px;height:38px;background:#ffffff;box-sizing:border-box;border:1px solid #adadad;"></div>
<div class="r" style="left:1973px;top:1316px;width:34px;height:34px;background:#e1e1e1;box-sizing:border-box;border:1px solid #c8c8c8;"></div>
<svg class="r" style="left:1982px;top:1328px;" width="17" height="10" viewBox="0 0 17 10"><path d="M2 2 L8.5 8 L15 2" stroke="#444" stroke-width="1.5" fill="none"/></svg>
<div class="t" style="left:1861.0px;top:1322.1px;font-size:22px;color:#000;transform:scaleX(0.946);">Number</div>
<div class="r" style="left:1488px;top:1368px;width:90px;height:38px;background:#ffffff;box-sizing:border-box;border:1px solid #adadad;"></div>
<div class="r" style="left:1542px;top:1370px;width:34px;height:34px;background:#e1e1e1;box-sizing:border-box;border:1px solid #c8c8c8;"></div>
<svg class="r" style="left:1551px;top:1382px;" width="17" height="10" viewBox="0 0 17 10"><path d="M2 2 L8.5 8 L15 2" stroke="#444" stroke-width="1.5" fill="none"/></svg>
<div class="t" style="left:1495.0px;top:1376.1px;font-size:22px;color:#000;transform:scaleX(0.902);">&gt;=</div>
<div class="r" style="left:1595px;top:1368px;width:244px;height:38px;background:#ffffff;box-sizing:border-box;border:1px solid #adadad;"></div>
<div class="t" style="left:1600.0px;top:1376.1px;font-size:22px;color:#000;transform:scaleX(0.865);">10000</div>
<div class="r" style="left:1802px;top:1368px;width:37px;height:38px;background:#f0f0f0;box-sizing:border-box;border:2px solid #adadad;"></div>
<svg class="r" style="left:1810px;top:1371px;" width="22" height="32" viewBox="0 0 22 32"><path d="M11 3 L4 12 H9 V26 H13 V12 H18 Z" fill="#000"/><rect x="2" y="29" width="19" height="1.5" fill="#000"/></svg>
<div class="r" style="left:1856px;top:1368px;width:153px;height:38px;background:#ffffff;box-sizing:border-box;border:1px solid #adadad;"></div>
<div class="r" style="left:1973px;top:1370px;width:34px;height:34px;background:#e1e1e1;box-sizing:border-box;border:1px solid #c8c8c8;"></div>
<svg class="r" style="left:1982px;top:1382px;" width="17" height="10" viewBox="0 0 17 10"><path d="M2 2 L8.5 8 L15 2" stroke="#444" stroke-width="1.5" fill="none"/></svg>
<div class="t" style="left:1861.0px;top:1376.1px;font-size:22px;color:#000;transform:scaleX(0.946);">Number</div>
<div class="r" style="left:1728px;top:1485px;width:136px;height:49px;background:#e1e1e1;box-sizing:border-box;border:2px solid #0078d7;"></div>
<div class="t" style="left:1783.0px;top:1499.1px;font-size:22px;color:#000;transform:scaleX(0.819);">OK</div>
<div class="r" style="left:1883px;top:1485px;width:136px;height:49px;background:#e1e1e1;box-sizing:border-box;border:1px solid #adadad;"></div>
<div class="t" style="left:1920.0px;top:1499.1px;font-size:22px;color:#000;transform:scaleX(0.887);">Cancel</div>
<div class="r" style="left:778px;top:635px;width:294px;height:1153px;background:transparent;box-sizing:border-box;border:3px solid #e8474a;"></div>
<div class="r" style="left:0px;top:0px;width:1px;height:1787px;background:#2a2a2a;"></div>
</body></html>
